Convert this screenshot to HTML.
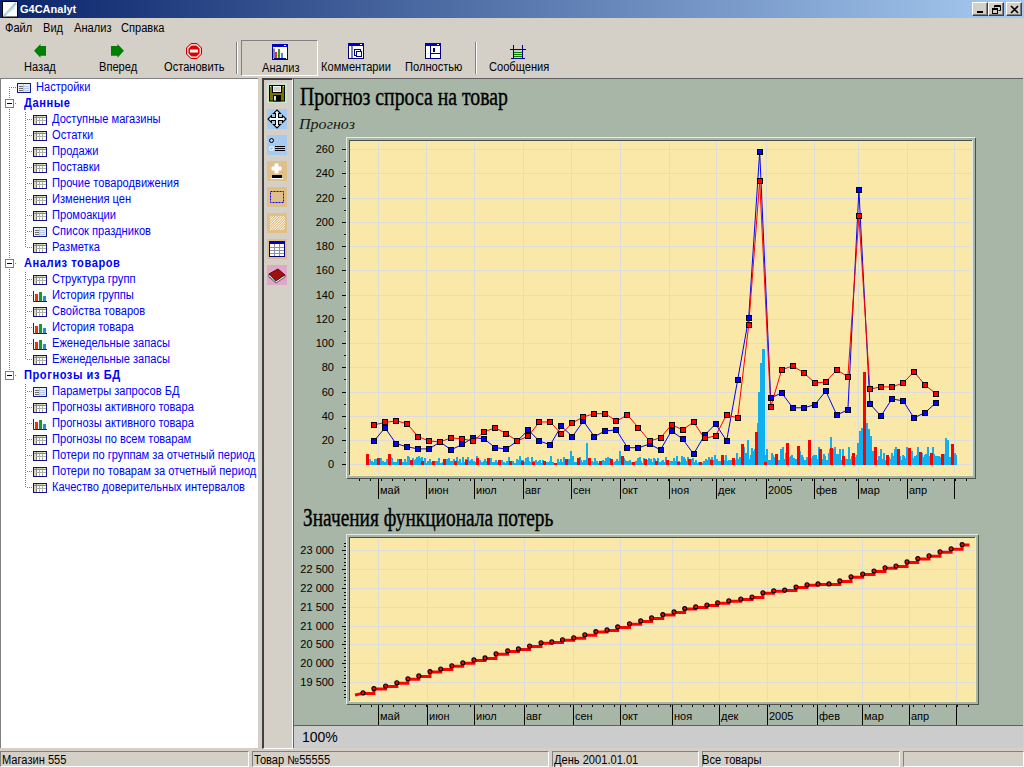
<!DOCTYPE html><html><head><meta charset="utf-8"><style>
*{margin:0;padding:0;box-sizing:border-box}
html,body{width:1024px;height:768px;overflow:hidden;background:#D4D0C8;font-family:"Liberation Sans",sans-serif;font-size:11px;color:#000}
.a{position:absolute}
.t{position:absolute;white-space:nowrap;line-height:13px}
.u{font-size:12px;transform:scaleX(0.925);transform-origin:0 0}
</style></head><body><div class="a" style="left:0;top:0;width:1024px;height:18px;background:linear-gradient(to right,#0A246A,#A6CAF0)"></div>
<svg class="a" style="left:2px;top:1px" width="16" height="17" viewBox="0 0 16 17">
<rect x="0.5" y="0.5" width="15" height="15.5" fill="#fff" stroke="#000"/>
<path d="M2 15 L14 2" stroke="#9cc8d8" stroke-width="2"/><path d="M4 13 L13 5 M6 12 L12 7" stroke="#c8e0e8" stroke-width="1.5"/>
</svg>
<div class="t" style="left:20px;top:2px;color:#fff;font-weight:bold;font-size:11px;line-height:14px">G4CAnalyt</div>
<div class="a" style="left:972px;top:2px;width:16px;height:14px;background:#D4D0C8;border-top:1px solid #fff;border-left:1px solid #fff;border-right:1px solid #404040;border-bottom:1px solid #404040;box-shadow:inset -1px -1px 0 #808080"><div class="a" style="left:4px;top:8px;width:6px;height:2px;background:#000"></div></div>
<div class="a" style="left:988px;top:2px;width:16px;height:14px;background:#D4D0C8;border-top:1px solid #fff;border-left:1px solid #fff;border-right:1px solid #404040;border-bottom:1px solid #404040;box-shadow:inset -1px -1px 0 #808080"><svg class="a" style="left:2px;top:1px" width="10" height="10"><path d="M3.5 1.5h6v5h-2 M3.5 1.5v2 M3.5 2.5h6" stroke="#000" fill="none"/><rect x="1.5" y="4.5" width="5" height="5" fill="none" stroke="#000"/><path d="M1.5 5.5h5" stroke="#000"/></svg></div>
<div class="a" style="left:1006px;top:2px;width:16px;height:14px;background:#D4D0C8;border-top:1px solid #fff;border-left:1px solid #fff;border-right:1px solid #404040;border-bottom:1px solid #404040;box-shadow:inset -1px -1px 0 #808080"><svg class="a" style="left:3px;top:2px" width="9" height="9"><path d="M1 1L8 8M8 1L1 8" stroke="#000" stroke-width="1.6"/></svg></div>
<div class="t u" style="left:5px;top:22px">Файл</div>
<div class="t u" style="left:43px;top:22px">Вид</div>
<div class="t u" style="left:74px;top:22px">Анализ</div>
<div class="t u" style="left:121px;top:22px">Справка</div>
<div class="a" style="left:236px;top:42px;width:1px;height:32px;background:#808080"></div><div class="a" style="left:237px;top:42px;width:1px;height:32px;background:#fff"></div>
<div class="a" style="left:475px;top:42px;width:1px;height:32px;background:#808080"></div><div class="a" style="left:476px;top:42px;width:1px;height:32px;background:#fff"></div>
<div class="a" style="left:241px;top:40px;width:77px;height:36px;border-top:1px solid #808080;border-left:1px solid #808080;border-right:1px solid #fff;border-bottom:1px solid #fff"></div>
<svg class="a" style="left:33px;top:43px" width="15" height="16" viewBox="0 0 15 16"><path d="M1 7.8 L7.5 1 V3 H13 V12.7 H7.5 V14.8 Z" fill="#008000"/></svg>
<svg class="a" style="left:110px;top:43px" width="15" height="16" viewBox="0 0 15 16"><path d="M14 7.8 L7.5 1 V3 H1 V12.7 H7.5 V14.8 Z" fill="#008000"/></svg>
<svg class="a" style="left:186px;top:43px" width="16" height="16" viewBox="0 0 16 16"><path d="M5 0.5H11L15.5 5V11L11 15.5H5L0.5 11V5Z" fill="#E00000" stroke="#C00000"/><path d="M5.3 1.8H10.7L14.2 5.3V10.7L10.7 14.2H5.3L1.8 10.7V5.3Z" fill="none" stroke="#fff" stroke-width="1.2"/><rect x="4" y="6.5" width="8" height="3" fill="#fff"/></svg>
<svg class="a" style="left:272px;top:44px" width="16" height="16" viewBox="0 0 16 16"><rect x="0.5" y="0.5" width="15" height="15" fill="#fff" stroke="#000080"/><rect x="0" y="0" width="16" height="3" fill="#0000C0"/><rect x="12" y="1" width="2" height="1" fill="#fff"/><rect x="3" y="8" width="2" height="6" fill="#E03020"/><rect x="6" y="5" width="2" height="9" fill="#20A020"/><rect x="9" y="9" width="2" height="5" fill="#3090D0"/><path d="M2 4.5V14.5H14" stroke="#000080" fill="none"/></svg>
<svg class="a" style="left:348px;top:43px" width="16" height="16" viewBox="0 0 16 16"><rect x="0.5" y="0.5" width="15" height="15" fill="#fff" stroke="#000080"/><rect x="0" y="0" width="16" height="3" fill="#0000C0"/><rect x="12" y="1" width="2" height="1" fill="#fff"/><path d="M4 3V15" stroke="#000080"/><rect x="6.5" y="6.5" width="6" height="6" fill="none" stroke="#000080"/><rect x="8.5" y="8.5" width="5" height="5" fill="#fff" stroke="#000080"/></svg>
<svg class="a" style="left:425px;top:43px" width="16" height="16" viewBox="0 0 16 16"><rect x="0.5" y="0.5" width="15" height="15" fill="#fff" stroke="#000080"/><rect x="0" y="0" width="16" height="3" fill="#0000C0"/><rect x="12" y="1" width="2" height="1" fill="#fff"/><path d="M5.5 3V15 M5.5 10.5H15" stroke="#000080"/><rect x="8" y="5" width="2" height="4" fill="#000080"/></svg>
<svg class="a" style="left:510px;top:45px" width="16" height="15" viewBox="0 0 16 15"><path d="M3.5 0V14 M12.5 0V14 M0 4.5H16 M1 13.5H15" stroke="#000080" fill="none"/><path d="M4 7.5H12 M4 9.5H12 M4 11.5H12" stroke="#008000"/></svg>
<div class="t u" style="left:24px;top:61px">Назад</div>
<div class="t u" style="left:99px;top:61px">Вперед</div>
<div class="t u" style="left:164px;top:61px">Остановить</div>
<div class="t u" style="left:262px;top:62px">Анализ</div>
<div class="t u" style="left:321px;top:61px">Комментарии</div>
<div class="t u" style="left:405px;top:61px">Полностью</div>
<div class="t u" style="left:489px;top:61px">Сообщения</div>
<div class="a" style="left:0;top:78px;width:258px;height:670px;background:#fff;border-top:1px solid #808080;border-left:1px solid #808080;"></div>
<div class="a" style="left:262px;top:78px;width:31px;height:671px;background:#D4D0C8;border-top:2px solid #404040;border-left:2px solid #404040;border-right:1px solid #fff;border-bottom:1px solid #fff"></div>
<div class="a" style="left:293px;top:78px;width:730px;height:648px;background:#A7B6A7;border-top:1px solid #606060;border-left:1px solid #606060;border-bottom:1px solid #606060"></div>
<div class="a" style="left:293px;top:726px;width:730px;height:22px;background:#CCCCCC;border-left:1px solid #606060"></div>
<div class="t" style="left:302px;top:729px;font-size:14px;line-height:16px">100%</div>
<div class="a" style="left:1023px;top:78px;width:1px;height:670px;background:#D4D0C8"></div>
<div class="a" style="left:0px;top:751px;width:249px;height:16px;border-top:1px solid #808080;border-left:1px solid #808080;border-right:1px solid #fff;border-bottom:1px solid #fff"></div>
<div class="t u" style="left:2px;top:754px">Магазин 555</div>
<div class="a" style="left:252px;top:751px;width:297px;height:16px;border-top:1px solid #808080;border-left:1px solid #808080;border-right:1px solid #fff;border-bottom:1px solid #fff"></div>
<div class="t u" style="left:254px;top:754px">Товар №55555</div>
<div class="a" style="left:552px;top:751px;width:147px;height:16px;border-top:1px solid #808080;border-left:1px solid #808080;border-right:1px solid #fff;border-bottom:1px solid #fff"></div>
<div class="t u" style="left:554px;top:754px">День 2001.01.01</div>
<div class="a" style="left:702px;top:751px;width:198px;height:16px;border-top:1px solid #808080;border-left:1px solid #808080;border-right:1px solid #fff;border-bottom:1px solid #fff"></div>
<div class="t u" style="left:702px;top:754px">Все товары</div>
<div class="a" style="left:903px;top:751px;width:121px;height:16px;border-top:1px solid #808080;border-left:1px solid #808080;border-right:1px solid #fff;border-bottom:1px solid #fff"></div>
<div class="a" style="left:267px;top:83px;width:20px;height:20px;background:#C8E8C8"></div><svg class="a" style="left:267px;top:83px" width="20" height="20" viewBox="0 0 20 20"><rect x="2.5" y="2.5" width="15" height="15.5" fill="#7A7000" stroke="#000"/><rect x="5.5" y="2.5" width="9" height="7" fill="#fff" stroke="#000"/><path d="M6.5 5H13.5M6.5 7H13.5" stroke="#a8a8a8"/><rect x="6" y="12" width="8" height="6.5" fill="#000"/><rect x="7" y="13" width="2" height="4.5" fill="#ddd"/><rect x="3" y="3" width="1" height="1" fill="#cfe"/><rect x="16" y="3" width="1" height="1" fill="#cfe"/></svg>
<div class="a" style="left:267px;top:109px;width:20px;height:20px;background:#A6CAF0"></div><svg class="a" style="left:267px;top:109px" width="20" height="20" viewBox="0 0 20 20"><path d="M10 1L13.5 4.5H11.5V8.5H15.5V6.5L19 10L15.5 13.5V11.5H11.5V15.5H13.5L10 19L6.5 15.5H8.5V11.5H4.5V13.5L1 10L4.5 6.5V8.5H8.5V4.5H6.5Z" fill="#fff" stroke="#000" stroke-width="1.1" stroke-linejoin="miter"/></svg>
<div class="a" style="left:267px;top:135px;width:20px;height:20px;background:#A6CAF0"></div><svg class="a" style="left:267px;top:135px" width="20" height="20" viewBox="0 0 20 20"><circle cx="4.5" cy="5.5" r="2" fill="none" stroke="#000"/><circle cx="4.5" cy="13.5" r="2" fill="none" stroke="#fff"/><path d="M8 11.5H18M8 13.5H18M8 15.5H18" stroke="#000"/></svg>
<div class="a" style="left:267px;top:161px;width:20px;height:20px;background:#E0C088"></div><svg class="a" style="left:267px;top:161px" width="20" height="20" viewBox="0 0 20 20"><path d="M8 3H11V6H14V9H11V12H8V9H5V6H8Z" fill="#fff" stroke="#fff"/><rect x="5" y="14" width="10" height="3" fill="#000"/><rect x="4" y="17" width="12" height="1" fill="#fff"/></svg>
<div class="a" style="left:267px;top:187px;width:20px;height:20px;background:#E0C088"></div><svg class="a" style="left:267px;top:187px" width="20" height="20" viewBox="0 0 20 20"><rect x="3.5" y="4.5" width="13" height="11" fill="none" stroke="#0000FF" stroke-dasharray="2 1"/></svg>
<div class="a" style="left:267px;top:213px;width:20px;height:20px;background:#E0C088"></div><svg class="a" style="left:267px;top:213px" width="20" height="20" viewBox="0 0 20 20"><clipPath id="hc"><rect x="3" y="3" width="15" height="14"/></clipPath><g clip-path="url(#hc)"><path d="M-12.0 17L2.0 3" stroke="#fff" stroke-width="0.9"/><path d="M-9.5 17L4.5 3" stroke="#fff" stroke-width="0.9"/><path d="M-7.0 17L7.0 3" stroke="#fff" stroke-width="0.9"/><path d="M-4.5 17L9.5 3" stroke="#fff" stroke-width="0.9"/><path d="M-2.0 17L12.0 3" stroke="#fff" stroke-width="0.9"/><path d="M0.5 17L14.5 3" stroke="#fff" stroke-width="0.9"/><path d="M3.0 17L17.0 3" stroke="#fff" stroke-width="0.9"/><path d="M5.5 17L19.5 3" stroke="#fff" stroke-width="0.9"/><path d="M8.0 17L22.0 3" stroke="#fff" stroke-width="0.9"/><path d="M10.5 17L24.5 3" stroke="#fff" stroke-width="0.9"/><path d="M13.0 17L27.0 3" stroke="#fff" stroke-width="0.9"/><path d="M15.5 17L29.5 3" stroke="#fff" stroke-width="0.9"/></g></svg>
<div class="a" style="left:267px;top:239px;width:20px;height:20px;background:#E0C088"></div><svg class="a" style="left:267px;top:239px" width="20" height="20" viewBox="0 0 20 20"><rect x="2.5" y="2.5" width="15" height="15" fill="#fff" stroke="#000080"/><rect x="2" y="2" width="16" height="3" fill="#0000C0"/><path d="M3 8.5H17M3 11.5H17M3 14.5H17M7.5 5V17M12.5 5V17" stroke="#9090A0"/></svg>
<div class="a" style="left:267px;top:265px;width:20px;height:20px;background:#E0A8C8"></div><svg class="a" style="left:267px;top:265px" width="20" height="20" viewBox="0 0 20 20"><path d="M2 9L11 4L18 10L9 16Z" fill="#A01010" stroke="#600"/><path d="M2 9V12L9 18L18 12V10L9 16Z" fill="#fff" stroke="#000" stroke-width="0.6"/><path d="M3 12L9 17" stroke="#2a8" /></svg>
<div class="a" style="left:9px;top:87px;width:1px;height:288px;background:repeating-linear-gradient(to bottom,#808080 0 1px,transparent 1px 2px)"></div>
<div class="a" style="left:25px;top:112px;width:1px;height:136px;background:repeating-linear-gradient(to bottom,#808080 0 1px,transparent 1px 2px)"></div>
<div class="a" style="left:25px;top:272px;width:1px;height:88px;background:repeating-linear-gradient(to bottom,#808080 0 1px,transparent 1px 2px)"></div>
<div class="a" style="left:25px;top:384px;width:1px;height:104px;background:repeating-linear-gradient(to bottom,#808080 0 1px,transparent 1px 2px)"></div>
<div class="a" style="left:11px;top:87px;width:5px;height:1px;background:repeating-linear-gradient(to right,#808080 0 1px,transparent 1px 2px)"></div>
<svg class="a" style="left:17px;top:83px" width="15" height="11"><rect x="0.5" y="0.5" width="13" height="9" fill="#E8ECF4" stroke="#10208A"/><path d="M2 3.5H6M2 5.5H6M2 7.5H6" stroke="#707070"/><path d="M7 3.5H12M7 5.5H12M7 7.5H12" stroke="#B8C8E8"/><path d="M6.5 1V9" stroke="#C0C8E0"/></svg>
<div class="t u" style="left:36px;top:81px;color:#0000FF">Настройки</div>
<div class="a" style="left:5px;top:99px;width:9px;height:9px;border:1px solid #808080;background:#fff"></div><div class="a" style="left:7px;top:103px;width:5px;height:1px;background:#000"></div>
<div class="a" style="left:15px;top:103px;width:1px;height:1px;background:#808080"></div>
<div class="t u" style="left:24px;top:97px;color:#0000FF;font-weight:bold;letter-spacing:0.6px">Данные</div>
<div class="a" style="left:27px;top:119px;width:5px;height:1px;background:repeating-linear-gradient(to right,#808080 0 1px,transparent 1px 2px)"></div>
<svg class="a" style="left:33px;top:115px" width="15" height="11"><rect x="0.5" y="0.5" width="13" height="9" fill="#fff" stroke="#10108A"/><rect x="1" y="1" width="12" height="2" fill="#D8D4C0"/><rect x="1" y="1" width="2.5" height="8" fill="#D8D4C0"/><path d="M1 2.5H13M3.5 1V9" stroke="#888"/><path d="M3.5 5.5H13M6.5 3V9M9.5 3V9" stroke="#B0B0B0"/></svg>
<div class="t u" style="left:52px;top:113px;color:#0000FF">Доступные магазины</div>
<div class="a" style="left:27px;top:135px;width:5px;height:1px;background:repeating-linear-gradient(to right,#808080 0 1px,transparent 1px 2px)"></div>
<svg class="a" style="left:33px;top:131px" width="15" height="11"><rect x="0.5" y="0.5" width="13" height="9" fill="#fff" stroke="#10108A"/><rect x="1" y="1" width="12" height="2" fill="#D8D4C0"/><rect x="1" y="1" width="2.5" height="8" fill="#D8D4C0"/><path d="M1 2.5H13M3.5 1V9" stroke="#888"/><path d="M3.5 5.5H13M6.5 3V9M9.5 3V9" stroke="#B0B0B0"/></svg>
<div class="t u" style="left:52px;top:129px;color:#0000FF">Остатки</div>
<div class="a" style="left:27px;top:151px;width:5px;height:1px;background:repeating-linear-gradient(to right,#808080 0 1px,transparent 1px 2px)"></div>
<svg class="a" style="left:33px;top:147px" width="15" height="11"><rect x="0.5" y="0.5" width="13" height="9" fill="#fff" stroke="#10108A"/><rect x="1" y="1" width="12" height="2" fill="#D8D4C0"/><rect x="1" y="1" width="2.5" height="8" fill="#D8D4C0"/><path d="M1 2.5H13M3.5 1V9" stroke="#888"/><path d="M3.5 5.5H13M6.5 3V9M9.5 3V9" stroke="#B0B0B0"/></svg>
<div class="t u" style="left:52px;top:145px;color:#0000FF">Продажи</div>
<div class="a" style="left:27px;top:167px;width:5px;height:1px;background:repeating-linear-gradient(to right,#808080 0 1px,transparent 1px 2px)"></div>
<svg class="a" style="left:33px;top:163px" width="15" height="11"><rect x="0.5" y="0.5" width="13" height="9" fill="#fff" stroke="#10108A"/><rect x="1" y="1" width="12" height="2" fill="#D8D4C0"/><rect x="1" y="1" width="2.5" height="8" fill="#D8D4C0"/><path d="M1 2.5H13M3.5 1V9" stroke="#888"/><path d="M3.5 5.5H13M6.5 3V9M9.5 3V9" stroke="#B0B0B0"/></svg>
<div class="t u" style="left:52px;top:161px;color:#0000FF">Поставки</div>
<div class="a" style="left:27px;top:183px;width:5px;height:1px;background:repeating-linear-gradient(to right,#808080 0 1px,transparent 1px 2px)"></div>
<svg class="a" style="left:33px;top:179px" width="15" height="11"><rect x="0.5" y="0.5" width="13" height="9" fill="#fff" stroke="#10108A"/><rect x="1" y="1" width="12" height="2" fill="#D8D4C0"/><rect x="1" y="1" width="2.5" height="8" fill="#D8D4C0"/><path d="M1 2.5H13M3.5 1V9" stroke="#888"/><path d="M3.5 5.5H13M6.5 3V9M9.5 3V9" stroke="#B0B0B0"/></svg>
<div class="t u" style="left:52px;top:177px;color:#0000FF">Прочие товародвижения</div>
<div class="a" style="left:27px;top:199px;width:5px;height:1px;background:repeating-linear-gradient(to right,#808080 0 1px,transparent 1px 2px)"></div>
<svg class="a" style="left:33px;top:195px" width="15" height="11"><rect x="0.5" y="0.5" width="13" height="9" fill="#fff" stroke="#10108A"/><rect x="1" y="1" width="12" height="2" fill="#D8D4C0"/><rect x="1" y="1" width="2.5" height="8" fill="#D8D4C0"/><path d="M1 2.5H13M3.5 1V9" stroke="#888"/><path d="M3.5 5.5H13M6.5 3V9M9.5 3V9" stroke="#B0B0B0"/></svg>
<div class="t u" style="left:52px;top:193px;color:#0000FF">Изменения цен</div>
<div class="a" style="left:27px;top:215px;width:5px;height:1px;background:repeating-linear-gradient(to right,#808080 0 1px,transparent 1px 2px)"></div>
<svg class="a" style="left:33px;top:211px" width="15" height="11"><rect x="0.5" y="0.5" width="13" height="9" fill="#fff" stroke="#10108A"/><rect x="1" y="1" width="12" height="2" fill="#D8D4C0"/><rect x="1" y="1" width="2.5" height="8" fill="#D8D4C0"/><path d="M1 2.5H13M3.5 1V9" stroke="#888"/><path d="M3.5 5.5H13M6.5 3V9M9.5 3V9" stroke="#B0B0B0"/></svg>
<div class="t u" style="left:52px;top:209px;color:#0000FF">Промоакции</div>
<div class="a" style="left:27px;top:231px;width:5px;height:1px;background:repeating-linear-gradient(to right,#808080 0 1px,transparent 1px 2px)"></div>
<svg class="a" style="left:33px;top:227px" width="15" height="11"><rect x="0.5" y="0.5" width="13" height="9" fill="#E8ECF4" stroke="#10208A"/><path d="M2 3.5H6M2 5.5H6M2 7.5H6" stroke="#707070"/><path d="M7 3.5H12M7 5.5H12M7 7.5H12" stroke="#B8C8E8"/><path d="M6.5 1V9" stroke="#C0C8E0"/></svg>
<div class="t u" style="left:52px;top:225px;color:#0000FF">Список праздников</div>
<div class="a" style="left:27px;top:247px;width:5px;height:1px;background:repeating-linear-gradient(to right,#808080 0 1px,transparent 1px 2px)"></div>
<svg class="a" style="left:33px;top:243px" width="15" height="11"><rect x="0.5" y="0.5" width="13" height="9" fill="#fff" stroke="#10108A"/><rect x="1" y="1" width="12" height="2" fill="#D8D4C0"/><rect x="1" y="1" width="2.5" height="8" fill="#D8D4C0"/><path d="M1 2.5H13M3.5 1V9" stroke="#888"/><path d="M3.5 5.5H13M6.5 3V9M9.5 3V9" stroke="#B0B0B0"/></svg>
<div class="t u" style="left:52px;top:241px;color:#0000FF">Разметка</div>
<div class="a" style="left:5px;top:259px;width:9px;height:9px;border:1px solid #808080;background:#fff"></div><div class="a" style="left:7px;top:263px;width:5px;height:1px;background:#000"></div>
<div class="a" style="left:15px;top:263px;width:1px;height:1px;background:#808080"></div>
<div class="t u" style="left:24px;top:257px;color:#0000FF;font-weight:bold;letter-spacing:0.6px">Анализ товаров</div>
<div class="a" style="left:27px;top:279px;width:5px;height:1px;background:repeating-linear-gradient(to right,#808080 0 1px,transparent 1px 2px)"></div>
<svg class="a" style="left:33px;top:275px" width="15" height="11"><rect x="0.5" y="0.5" width="13" height="9" fill="#fff" stroke="#10108A"/><rect x="1" y="1" width="12" height="2" fill="#D8D4C0"/><rect x="1" y="1" width="2.5" height="8" fill="#D8D4C0"/><path d="M1 2.5H13M3.5 1V9" stroke="#888"/><path d="M3.5 5.5H13M6.5 3V9M9.5 3V9" stroke="#B0B0B0"/></svg>
<div class="t u" style="left:52px;top:273px;color:#0000FF">Структура групп</div>
<div class="a" style="left:27px;top:295px;width:5px;height:1px;background:repeating-linear-gradient(to right,#808080 0 1px,transparent 1px 2px)"></div>
<svg class="a" style="left:33px;top:291px" width="15" height="11"><path d="M0.5 0V10.5H14" stroke="#10208A" fill="none"/><rect x="2" y="3" width="3" height="7" fill="#F03010"/><rect x="6" y="1" width="3" height="9" fill="#10A020"/><rect x="10" y="5" width="3" height="5" fill="#2090D0"/></svg>
<div class="t u" style="left:52px;top:289px;color:#0000FF">История группы</div>
<div class="a" style="left:27px;top:311px;width:5px;height:1px;background:repeating-linear-gradient(to right,#808080 0 1px,transparent 1px 2px)"></div>
<svg class="a" style="left:33px;top:307px" width="15" height="11"><rect x="0.5" y="0.5" width="13" height="9" fill="#fff" stroke="#10108A"/><rect x="1" y="1" width="12" height="2" fill="#D8D4C0"/><rect x="1" y="1" width="2.5" height="8" fill="#D8D4C0"/><path d="M1 2.5H13M3.5 1V9" stroke="#888"/><path d="M3.5 5.5H13M6.5 3V9M9.5 3V9" stroke="#B0B0B0"/></svg>
<div class="t u" style="left:52px;top:305px;color:#0000FF">Свойства товаров</div>
<div class="a" style="left:27px;top:327px;width:5px;height:1px;background:repeating-linear-gradient(to right,#808080 0 1px,transparent 1px 2px)"></div>
<svg class="a" style="left:33px;top:323px" width="15" height="11"><path d="M0.5 0V10.5H14" stroke="#10208A" fill="none"/><rect x="2" y="3" width="3" height="7" fill="#F03010"/><rect x="6" y="1" width="3" height="9" fill="#10A020"/><rect x="10" y="5" width="3" height="5" fill="#2090D0"/></svg>
<div class="t u" style="left:52px;top:321px;color:#0000FF">История товара</div>
<div class="a" style="left:27px;top:343px;width:5px;height:1px;background:repeating-linear-gradient(to right,#808080 0 1px,transparent 1px 2px)"></div>
<svg class="a" style="left:33px;top:339px" width="15" height="11"><path d="M0.5 0V10.5H14" stroke="#10208A" fill="none"/><rect x="2" y="3" width="3" height="7" fill="#F03010"/><rect x="6" y="1" width="3" height="9" fill="#10A020"/><rect x="10" y="5" width="3" height="5" fill="#2090D0"/></svg>
<div class="t u" style="left:52px;top:337px;color:#0000FF">Еженедельные запасы</div>
<div class="a" style="left:27px;top:359px;width:5px;height:1px;background:repeating-linear-gradient(to right,#808080 0 1px,transparent 1px 2px)"></div>
<svg class="a" style="left:33px;top:355px" width="15" height="11"><rect x="0.5" y="0.5" width="13" height="9" fill="#fff" stroke="#10108A"/><rect x="1" y="1" width="12" height="2" fill="#D8D4C0"/><rect x="1" y="1" width="2.5" height="8" fill="#D8D4C0"/><path d="M1 2.5H13M3.5 1V9" stroke="#888"/><path d="M3.5 5.5H13M6.5 3V9M9.5 3V9" stroke="#B0B0B0"/></svg>
<div class="t u" style="left:52px;top:353px;color:#0000FF">Еженедельные запасы</div>
<div class="a" style="left:5px;top:371px;width:9px;height:9px;border:1px solid #808080;background:#fff"></div><div class="a" style="left:7px;top:375px;width:5px;height:1px;background:#000"></div>
<div class="a" style="left:15px;top:375px;width:1px;height:1px;background:#808080"></div>
<div class="t u" style="left:24px;top:369px;color:#0000FF;font-weight:bold;letter-spacing:0.6px">Прогнозы из БД</div>
<div class="a" style="left:27px;top:391px;width:5px;height:1px;background:repeating-linear-gradient(to right,#808080 0 1px,transparent 1px 2px)"></div>
<svg class="a" style="left:33px;top:387px" width="15" height="11"><rect x="0.5" y="0.5" width="13" height="9" fill="#E8ECF4" stroke="#10208A"/><path d="M2 3.5H6M2 5.5H6M2 7.5H6" stroke="#707070"/><path d="M7 3.5H12M7 5.5H12M7 7.5H12" stroke="#B8C8E8"/><path d="M6.5 1V9" stroke="#C0C8E0"/></svg>
<div class="t u" style="left:52px;top:385px;color:#0000FF">Параметры запросов БД</div>
<div class="a" style="left:27px;top:407px;width:5px;height:1px;background:repeating-linear-gradient(to right,#808080 0 1px,transparent 1px 2px)"></div>
<svg class="a" style="left:33px;top:403px" width="15" height="11"><rect x="0.5" y="0.5" width="13" height="9" fill="#fff" stroke="#10108A"/><rect x="1" y="1" width="12" height="2" fill="#D8D4C0"/><rect x="1" y="1" width="2.5" height="8" fill="#D8D4C0"/><path d="M1 2.5H13M3.5 1V9" stroke="#888"/><path d="M3.5 5.5H13M6.5 3V9M9.5 3V9" stroke="#B0B0B0"/></svg>
<div class="t u" style="left:52px;top:401px;color:#0000FF">Прогнозы активного товара</div>
<div class="a" style="left:27px;top:423px;width:5px;height:1px;background:repeating-linear-gradient(to right,#808080 0 1px,transparent 1px 2px)"></div>
<svg class="a" style="left:33px;top:419px" width="15" height="11"><path d="M0.5 0V10.5H14" stroke="#10208A" fill="none"/><rect x="2" y="3" width="3" height="7" fill="#F03010"/><rect x="6" y="1" width="3" height="9" fill="#10A020"/><rect x="10" y="5" width="3" height="5" fill="#2090D0"/></svg>
<div class="t u" style="left:52px;top:417px;color:#0000FF">Прогнозы активного товара</div>
<div class="a" style="left:27px;top:439px;width:5px;height:1px;background:repeating-linear-gradient(to right,#808080 0 1px,transparent 1px 2px)"></div>
<svg class="a" style="left:33px;top:435px" width="15" height="11"><rect x="0.5" y="0.5" width="13" height="9" fill="#fff" stroke="#10108A"/><rect x="1" y="1" width="12" height="2" fill="#D8D4C0"/><rect x="1" y="1" width="2.5" height="8" fill="#D8D4C0"/><path d="M1 2.5H13M3.5 1V9" stroke="#888"/><path d="M3.5 5.5H13M6.5 3V9M9.5 3V9" stroke="#B0B0B0"/></svg>
<div class="t u" style="left:52px;top:433px;color:#0000FF">Прогнозы по всем товарам</div>
<div class="a" style="left:27px;top:455px;width:5px;height:1px;background:repeating-linear-gradient(to right,#808080 0 1px,transparent 1px 2px)"></div>
<svg class="a" style="left:33px;top:451px" width="15" height="11"><rect x="0.5" y="0.5" width="13" height="9" fill="#fff" stroke="#10108A"/><rect x="1" y="1" width="12" height="2" fill="#D8D4C0"/><rect x="1" y="1" width="2.5" height="8" fill="#D8D4C0"/><path d="M1 2.5H13M3.5 1V9" stroke="#888"/><path d="M3.5 5.5H13M6.5 3V9M9.5 3V9" stroke="#B0B0B0"/></svg>
<div class="t u" style="left:52px;top:449px;color:#0000FF">Потери по группам за отчетный период</div>
<div class="a" style="left:27px;top:471px;width:5px;height:1px;background:repeating-linear-gradient(to right,#808080 0 1px,transparent 1px 2px)"></div>
<svg class="a" style="left:33px;top:467px" width="15" height="11"><rect x="0.5" y="0.5" width="13" height="9" fill="#fff" stroke="#10108A"/><rect x="1" y="1" width="12" height="2" fill="#D8D4C0"/><rect x="1" y="1" width="2.5" height="8" fill="#D8D4C0"/><path d="M1 2.5H13M3.5 1V9" stroke="#888"/><path d="M3.5 5.5H13M6.5 3V9M9.5 3V9" stroke="#B0B0B0"/></svg>
<div class="t u" style="left:52px;top:465px;color:#0000FF">Потери по товарам за отчетный период</div>
<div class="a" style="left:27px;top:487px;width:5px;height:1px;background:repeating-linear-gradient(to right,#808080 0 1px,transparent 1px 2px)"></div>
<svg class="a" style="left:33px;top:483px" width="15" height="11"><rect x="0.5" y="0.5" width="13" height="9" fill="#fff" stroke="#10108A"/><rect x="1" y="1" width="12" height="2" fill="#D8D4C0"/><rect x="1" y="1" width="2.5" height="8" fill="#D8D4C0"/><path d="M1 2.5H13M3.5 1V9" stroke="#888"/><path d="M3.5 5.5H13M6.5 3V9M9.5 3V9" stroke="#B0B0B0"/></svg>
<div class="t u" style="left:52px;top:481px;color:#0000FF">Качество доверительных интервалов</div>
<div class="t" style="left:300px;top:82px;font-family:'Liberation Serif',serif;font-size:26px;line-height:29px;-webkit-text-stroke:0.4px #000;transform-origin:0 0;transform:scaleX(0.76)">Прогноз спроса на товар</div>
<div class="t" style="left:299px;top:116px;font-family:'Liberation Serif',serif;font-style:italic;font-size:15px;line-height:17px;color:#181818;transform-origin:0 0;transform:scaleX(1.07)">Прогноз</div>
<div class="t" style="left:303px;top:503px;font-family:'Liberation Serif',serif;font-size:26px;line-height:29px;-webkit-text-stroke:0.4px #000;transform-origin:0 0;transform:scaleX(0.745)">Значения функционала потерь</div>
<svg class="a" style="left:0;top:0;font-family:'Liberation Sans',sans-serif" width="1024" height="768"><rect x="346" y="137" width="629" height="1" fill="#E4ECE4"/><rect x="346" y="137" width="1" height="341" fill="#E4ECE4"/><rect x="975" y="138" width="1" height="341" fill="#4A524A"/><rect x="347" y="478" width="629" height="1" fill="#4A524A"/><rect x="350" y="141" width="622" height="334" fill="#FAE8A9"/><rect x="349" y="140" width="623" height="1" fill="#4A524A"/><rect x="349" y="140" width="1" height="335" fill="#4A524A"/><rect x="972" y="140" width="1" height="336" fill="#E4ECE4"/><rect x="349" y="475" width="623" height="1" fill="#E4ECE4"/><rect x="350" y="464" width="621" height="1" fill="#DCDCD8"/><rect x="342" y="464" width="4" height="1" fill="#000"/><text x="334" y="468" text-anchor="end" font-size="11">0</text><rect x="344" y="452" width="2" height="1" fill="#000"/><rect x="350" y="440" width="621" height="1" fill="#DCDCD8"/><rect x="342" y="440" width="4" height="1" fill="#000"/><text x="334" y="444" text-anchor="end" font-size="11">20</text><rect x="344" y="428" width="2" height="1" fill="#000"/><rect x="350" y="416" width="621" height="1" fill="#DCDCD8"/><rect x="342" y="416" width="4" height="1" fill="#000"/><text x="334" y="420" text-anchor="end" font-size="11">40</text><rect x="344" y="404" width="2" height="1" fill="#000"/><rect x="350" y="392" width="621" height="1" fill="#DCDCD8"/><rect x="342" y="392" width="4" height="1" fill="#000"/><text x="334" y="396" text-anchor="end" font-size="11">60</text><rect x="344" y="379" width="2" height="1" fill="#000"/><rect x="350" y="367" width="621" height="1" fill="#DCDCD8"/><rect x="342" y="367" width="4" height="1" fill="#000"/><text x="334" y="371" text-anchor="end" font-size="11">80</text><rect x="344" y="355" width="2" height="1" fill="#000"/><rect x="350" y="343" width="621" height="1" fill="#DCDCD8"/><rect x="342" y="343" width="4" height="1" fill="#000"/><text x="334" y="347" text-anchor="end" font-size="11">100</text><rect x="344" y="331" width="2" height="1" fill="#000"/><rect x="350" y="319" width="621" height="1" fill="#DCDCD8"/><rect x="342" y="319" width="4" height="1" fill="#000"/><text x="334" y="323" text-anchor="end" font-size="11">120</text><rect x="344" y="307" width="2" height="1" fill="#000"/><rect x="350" y="295" width="621" height="1" fill="#DCDCD8"/><rect x="342" y="295" width="4" height="1" fill="#000"/><text x="334" y="299" text-anchor="end" font-size="11">140</text><rect x="344" y="282" width="2" height="1" fill="#000"/><rect x="350" y="270" width="621" height="1" fill="#DCDCD8"/><rect x="342" y="270" width="4" height="1" fill="#000"/><text x="334" y="274" text-anchor="end" font-size="11">160</text><rect x="344" y="258" width="2" height="1" fill="#000"/><rect x="350" y="246" width="621" height="1" fill="#DCDCD8"/><rect x="342" y="246" width="4" height="1" fill="#000"/><text x="334" y="250" text-anchor="end" font-size="11">180</text><rect x="344" y="234" width="2" height="1" fill="#000"/><rect x="350" y="222" width="621" height="1" fill="#DCDCD8"/><rect x="342" y="222" width="4" height="1" fill="#000"/><text x="334" y="226" text-anchor="end" font-size="11">200</text><rect x="344" y="210" width="2" height="1" fill="#000"/><rect x="350" y="198" width="621" height="1" fill="#DCDCD8"/><rect x="342" y="198" width="4" height="1" fill="#000"/><text x="334" y="202" text-anchor="end" font-size="11">220</text><rect x="344" y="186" width="2" height="1" fill="#000"/><rect x="350" y="173" width="621" height="1" fill="#DCDCD8"/><rect x="342" y="173" width="4" height="1" fill="#000"/><text x="334" y="177" text-anchor="end" font-size="11">240</text><rect x="344" y="161" width="2" height="1" fill="#000"/><rect x="350" y="149" width="621" height="1" fill="#DCDCD8"/><rect x="342" y="149" width="4" height="1" fill="#000"/><text x="334" y="153" text-anchor="end" font-size="11">260</text><rect x="378" y="142" width="1" height="332" fill="#DCDCD8"/><rect x="378" y="479" width="1" height="20" fill="#000"/><rect x="426" y="142" width="1" height="332" fill="#DCDCD8"/><rect x="426" y="479" width="1" height="20" fill="#000"/><rect x="474" y="142" width="1" height="332" fill="#DCDCD8"/><rect x="474" y="479" width="1" height="20" fill="#000"/><rect x="523" y="142" width="1" height="332" fill="#DCDCD8"/><rect x="523" y="479" width="1" height="20" fill="#000"/><rect x="571" y="142" width="1" height="332" fill="#DCDCD8"/><rect x="571" y="479" width="1" height="20" fill="#000"/><rect x="620" y="142" width="1" height="332" fill="#DCDCD8"/><rect x="620" y="479" width="1" height="20" fill="#000"/><rect x="669" y="142" width="1" height="332" fill="#DCDCD8"/><rect x="669" y="479" width="1" height="20" fill="#000"/><rect x="716" y="142" width="1" height="332" fill="#DCDCD8"/><rect x="716" y="479" width="1" height="20" fill="#000"/><rect x="766" y="142" width="1" height="332" fill="#DCDCD8"/><rect x="766" y="479" width="1" height="20" fill="#000"/><rect x="814" y="142" width="1" height="332" fill="#DCDCD8"/><rect x="814" y="479" width="1" height="20" fill="#000"/><rect x="858" y="142" width="1" height="332" fill="#DCDCD8"/><rect x="858" y="479" width="1" height="20" fill="#000"/><rect x="907" y="142" width="1" height="332" fill="#DCDCD8"/><rect x="907" y="479" width="1" height="20" fill="#000"/><rect x="954" y="142" width="1" height="332" fill="#DCDCD8"/><rect x="954" y="479" width="1" height="20" fill="#000"/><text x="380" y="494" font-size="11">май</text><text x="428" y="494" font-size="11">июн</text><text x="476" y="494" font-size="11">июл</text><text x="525" y="494" font-size="11">авг</text><text x="573" y="494" font-size="11">сен</text><text x="622" y="494" font-size="11">окт</text><text x="671" y="494" font-size="11">ноя</text><text x="718" y="494" font-size="11">дек</text><text x="768" y="494" font-size="11">2005</text><text x="816" y="494" font-size="11">фев</text><text x="860" y="494" font-size="11">мар</text><text x="909" y="494" font-size="11">апр</text><rect x="359" y="479" width="1" height="2" fill="#000"/><rect x="370" y="479" width="1" height="2" fill="#000"/><rect x="381" y="479" width="1" height="2" fill="#000"/><rect x="392" y="479" width="1" height="2" fill="#000"/><rect x="404" y="479" width="1" height="2" fill="#000"/><rect x="415" y="479" width="1" height="2" fill="#000"/><rect x="426" y="479" width="1" height="2" fill="#000"/><rect x="437" y="479" width="1" height="2" fill="#000"/><rect x="448" y="479" width="1" height="2" fill="#000"/><rect x="459" y="479" width="1" height="2" fill="#000"/><rect x="470" y="479" width="1" height="2" fill="#000"/><rect x="481" y="479" width="1" height="2" fill="#000"/><rect x="492" y="479" width="1" height="2" fill="#000"/><rect x="503" y="479" width="1" height="2" fill="#000"/><rect x="514" y="479" width="1" height="2" fill="#000"/><rect x="525" y="479" width="1" height="2" fill="#000"/><rect x="536" y="479" width="1" height="2" fill="#000"/><rect x="547" y="479" width="1" height="2" fill="#000"/><rect x="558" y="479" width="1" height="2" fill="#000"/><rect x="569" y="479" width="1" height="2" fill="#000"/><rect x="580" y="479" width="1" height="2" fill="#000"/><rect x="591" y="479" width="1" height="2" fill="#000"/><rect x="602" y="479" width="1" height="2" fill="#000"/><rect x="613" y="479" width="1" height="2" fill="#000"/><rect x="624" y="479" width="1" height="2" fill="#000"/><rect x="635" y="479" width="1" height="2" fill="#000"/><rect x="646" y="479" width="1" height="2" fill="#000"/><rect x="657" y="479" width="1" height="2" fill="#000"/><rect x="668" y="479" width="1" height="2" fill="#000"/><rect x="679" y="479" width="1" height="2" fill="#000"/><rect x="690" y="479" width="1" height="2" fill="#000"/><rect x="701" y="479" width="1" height="2" fill="#000"/><rect x="712" y="479" width="1" height="2" fill="#000"/><rect x="723" y="479" width="1" height="2" fill="#000"/><rect x="734" y="479" width="1" height="2" fill="#000"/><rect x="745" y="479" width="1" height="2" fill="#000"/><rect x="756" y="479" width="1" height="2" fill="#000"/><rect x="768" y="479" width="1" height="2" fill="#000"/><rect x="779" y="479" width="1" height="2" fill="#000"/><rect x="790" y="479" width="1" height="2" fill="#000"/><rect x="801" y="479" width="1" height="2" fill="#000"/><rect x="812" y="479" width="1" height="2" fill="#000"/><rect x="823" y="479" width="1" height="2" fill="#000"/><rect x="834" y="479" width="1" height="2" fill="#000"/><rect x="845" y="479" width="1" height="2" fill="#000"/><rect x="856" y="479" width="1" height="2" fill="#000"/><rect x="867" y="479" width="1" height="2" fill="#000"/><rect x="878" y="479" width="1" height="2" fill="#000"/><rect x="889" y="479" width="1" height="2" fill="#000"/><rect x="900" y="479" width="1" height="2" fill="#000"/><rect x="911" y="479" width="1" height="2" fill="#000"/><rect x="922" y="479" width="1" height="2" fill="#000"/><rect x="933" y="479" width="1" height="2" fill="#000"/><rect x="944" y="479" width="1" height="2" fill="#000"/><rect x="955" y="479" width="1" height="2" fill="#000"/><rect x="966" y="479" width="1" height="2" fill="#000"/><rect x="366" y="459" width="2" height="6" fill="#10B0F0"/><rect x="367" y="461" width="2" height="4" fill="#10B0F0"/><rect x="369" y="459" width="2" height="6" fill="#10B0F0"/><rect x="371" y="461" width="2" height="4" fill="#10B0F0"/><rect x="372" y="462" width="2" height="3" fill="#10B0F0"/><rect x="374" y="459" width="2" height="6" fill="#10B0F0"/><rect x="375" y="459" width="2" height="6" fill="#10B0F0"/><rect x="377" y="459" width="2" height="6" fill="#10B0F0"/><rect x="378" y="461" width="2" height="4" fill="#10B0F0"/><rect x="380" y="458" width="2" height="7" fill="#10B0F0"/><rect x="382" y="461" width="2" height="4" fill="#10B0F0"/><rect x="383" y="462" width="2" height="3" fill="#10B0F0"/><rect x="385" y="462" width="2" height="3" fill="#10B0F0"/><rect x="386" y="459" width="2" height="6" fill="#10B0F0"/><rect x="388" y="459" width="2" height="6" fill="#10B0F0"/><rect x="390" y="457" width="2" height="8" fill="#10B0F0"/><rect x="391" y="458" width="2" height="7" fill="#10B0F0"/><rect x="393" y="462" width="2" height="3" fill="#10B0F0"/><rect x="394" y="462" width="2" height="3" fill="#10B0F0"/><rect x="396" y="462" width="2" height="3" fill="#10B0F0"/><rect x="397" y="459" width="2" height="6" fill="#10B0F0"/><rect x="399" y="461" width="2" height="4" fill="#10B0F0"/><rect x="401" y="462" width="2" height="3" fill="#10B0F0"/><rect x="402" y="462" width="2" height="3" fill="#10B0F0"/><rect x="404" y="459" width="2" height="6" fill="#10B0F0"/><rect x="405" y="462" width="2" height="3" fill="#10B0F0"/><rect x="407" y="456" width="2" height="9" fill="#10B0F0"/><rect x="408" y="457" width="2" height="8" fill="#10B0F0"/><rect x="410" y="463" width="2" height="2" fill="#10B0F0"/><rect x="412" y="458" width="2" height="7" fill="#10B0F0"/><rect x="413" y="460" width="2" height="5" fill="#10B0F0"/><rect x="415" y="459" width="2" height="6" fill="#10B0F0"/><rect x="416" y="457" width="2" height="8" fill="#10B0F0"/><rect x="418" y="456" width="2" height="9" fill="#10B0F0"/><rect x="419" y="458" width="2" height="7" fill="#10B0F0"/><rect x="421" y="457" width="2" height="8" fill="#10B0F0"/><rect x="423" y="462" width="2" height="3" fill="#10B0F0"/><rect x="424" y="458" width="2" height="7" fill="#10B0F0"/><rect x="426" y="463" width="2" height="2" fill="#10B0F0"/><rect x="427" y="461" width="2" height="4" fill="#10B0F0"/><rect x="429" y="459" width="2" height="6" fill="#10B0F0"/><rect x="431" y="462" width="2" height="3" fill="#10B0F0"/><rect x="432" y="463" width="2" height="2" fill="#10B0F0"/><rect x="434" y="463" width="2" height="2" fill="#10B0F0"/><rect x="435" y="461" width="2" height="4" fill="#10B0F0"/><rect x="437" y="461" width="2" height="4" fill="#10B0F0"/><rect x="438" y="458" width="2" height="7" fill="#10B0F0"/><rect x="440" y="463" width="2" height="2" fill="#10B0F0"/><rect x="442" y="462" width="2" height="3" fill="#10B0F0"/><rect x="443" y="459" width="2" height="6" fill="#10B0F0"/><rect x="445" y="460" width="2" height="5" fill="#10B0F0"/><rect x="446" y="459" width="2" height="6" fill="#10B0F0"/><rect x="448" y="458" width="2" height="7" fill="#10B0F0"/><rect x="449" y="461" width="2" height="4" fill="#10B0F0"/><rect x="451" y="461" width="2" height="4" fill="#10B0F0"/><rect x="453" y="459" width="2" height="6" fill="#10B0F0"/><rect x="454" y="461" width="2" height="4" fill="#10B0F0"/><rect x="456" y="457" width="2" height="8" fill="#10B0F0"/><rect x="457" y="461" width="2" height="4" fill="#10B0F0"/><rect x="459" y="459" width="2" height="6" fill="#10B0F0"/><rect x="460" y="463" width="2" height="2" fill="#10B0F0"/><rect x="462" y="457" width="2" height="8" fill="#10B0F0"/><rect x="464" y="462" width="2" height="3" fill="#10B0F0"/><rect x="465" y="459" width="2" height="6" fill="#10B0F0"/><rect x="467" y="457" width="2" height="8" fill="#10B0F0"/><rect x="468" y="461" width="2" height="4" fill="#10B0F0"/><rect x="470" y="460" width="2" height="5" fill="#10B0F0"/><rect x="471" y="459" width="2" height="6" fill="#10B0F0"/><rect x="473" y="461" width="2" height="4" fill="#10B0F0"/><rect x="475" y="462" width="2" height="3" fill="#10B0F0"/><rect x="476" y="456" width="2" height="9" fill="#10B0F0"/><rect x="478" y="461" width="2" height="4" fill="#10B0F0"/><rect x="479" y="460" width="2" height="5" fill="#10B0F0"/><rect x="481" y="462" width="2" height="3" fill="#10B0F0"/><rect x="483" y="461" width="2" height="4" fill="#10B0F0"/><rect x="484" y="459" width="2" height="6" fill="#10B0F0"/><rect x="486" y="461" width="2" height="4" fill="#10B0F0"/><rect x="487" y="463" width="2" height="2" fill="#10B0F0"/><rect x="489" y="462" width="2" height="3" fill="#10B0F0"/><rect x="490" y="458" width="2" height="7" fill="#10B0F0"/><rect x="492" y="462" width="2" height="3" fill="#10B0F0"/><rect x="494" y="462" width="2" height="3" fill="#10B0F0"/><rect x="495" y="460" width="2" height="5" fill="#10B0F0"/><rect x="497" y="462" width="2" height="3" fill="#10B0F0"/><rect x="498" y="461" width="2" height="4" fill="#10B0F0"/><rect x="500" y="461" width="2" height="4" fill="#10B0F0"/><rect x="501" y="460" width="2" height="5" fill="#10B0F0"/><rect x="503" y="462" width="2" height="3" fill="#10B0F0"/><rect x="505" y="463" width="2" height="2" fill="#10B0F0"/><rect x="506" y="461" width="2" height="4" fill="#10B0F0"/><rect x="508" y="457" width="2" height="8" fill="#10B0F0"/><rect x="509" y="463" width="2" height="2" fill="#10B0F0"/><rect x="511" y="461" width="2" height="4" fill="#10B0F0"/><rect x="512" y="461" width="2" height="4" fill="#10B0F0"/><rect x="514" y="463" width="2" height="2" fill="#10B0F0"/><rect x="516" y="459" width="2" height="6" fill="#10B0F0"/><rect x="517" y="460" width="2" height="5" fill="#10B0F0"/><rect x="519" y="456" width="2" height="9" fill="#10B0F0"/><rect x="520" y="460" width="2" height="5" fill="#10B0F0"/><rect x="522" y="460" width="2" height="5" fill="#10B0F0"/><rect x="523" y="462" width="2" height="3" fill="#10B0F0"/><rect x="525" y="458" width="2" height="7" fill="#10B0F0"/><rect x="527" y="457" width="2" height="8" fill="#10B0F0"/><rect x="528" y="461" width="2" height="4" fill="#10B0F0"/><rect x="530" y="462" width="2" height="3" fill="#10B0F0"/><rect x="531" y="457" width="2" height="8" fill="#10B0F0"/><rect x="533" y="461" width="2" height="4" fill="#10B0F0"/><rect x="535" y="460" width="2" height="5" fill="#10B0F0"/><rect x="536" y="462" width="2" height="3" fill="#10B0F0"/><rect x="538" y="461" width="2" height="4" fill="#10B0F0"/><rect x="539" y="460" width="2" height="5" fill="#10B0F0"/><rect x="541" y="463" width="2" height="2" fill="#10B0F0"/><rect x="542" y="460" width="2" height="5" fill="#10B0F0"/><rect x="544" y="462" width="2" height="3" fill="#10B0F0"/><rect x="546" y="462" width="2" height="3" fill="#10B0F0"/><rect x="547" y="462" width="2" height="3" fill="#10B0F0"/><rect x="549" y="461" width="2" height="4" fill="#10B0F0"/><rect x="550" y="456" width="2" height="9" fill="#10B0F0"/><rect x="552" y="462" width="2" height="3" fill="#10B0F0"/><rect x="553" y="463" width="2" height="2" fill="#10B0F0"/><rect x="555" y="463" width="2" height="2" fill="#10B0F0"/><rect x="557" y="459" width="2" height="6" fill="#10B0F0"/><rect x="558" y="462" width="2" height="3" fill="#10B0F0"/><rect x="560" y="459" width="2" height="6" fill="#10B0F0"/><rect x="561" y="462" width="2" height="3" fill="#10B0F0"/><rect x="563" y="457" width="2" height="8" fill="#10B0F0"/><rect x="564" y="459" width="2" height="6" fill="#10B0F0"/><rect x="566" y="461" width="2" height="4" fill="#10B0F0"/><rect x="568" y="459" width="2" height="6" fill="#10B0F0"/><rect x="569" y="459" width="2" height="6" fill="#10B0F0"/><rect x="571" y="461" width="2" height="4" fill="#10B0F0"/><rect x="572" y="456" width="2" height="9" fill="#10B0F0"/><rect x="574" y="462" width="2" height="3" fill="#10B0F0"/><rect x="575" y="462" width="2" height="3" fill="#10B0F0"/><rect x="577" y="460" width="2" height="5" fill="#10B0F0"/><rect x="579" y="457" width="2" height="8" fill="#10B0F0"/><rect x="580" y="460" width="2" height="5" fill="#10B0F0"/><rect x="582" y="462" width="2" height="3" fill="#10B0F0"/><rect x="583" y="460" width="2" height="5" fill="#10B0F0"/><rect x="585" y="460" width="2" height="5" fill="#10B0F0"/><rect x="587" y="461" width="2" height="4" fill="#10B0F0"/><rect x="588" y="463" width="2" height="2" fill="#10B0F0"/><rect x="590" y="461" width="2" height="4" fill="#10B0F0"/><rect x="591" y="461" width="2" height="4" fill="#10B0F0"/><rect x="593" y="462" width="2" height="3" fill="#10B0F0"/><rect x="594" y="458" width="2" height="7" fill="#10B0F0"/><rect x="596" y="461" width="2" height="4" fill="#10B0F0"/><rect x="598" y="463" width="2" height="2" fill="#10B0F0"/><rect x="599" y="461" width="2" height="4" fill="#10B0F0"/><rect x="601" y="462" width="2" height="3" fill="#10B0F0"/><rect x="602" y="460" width="2" height="5" fill="#10B0F0"/><rect x="604" y="461" width="2" height="4" fill="#10B0F0"/><rect x="605" y="458" width="2" height="7" fill="#10B0F0"/><rect x="607" y="457" width="2" height="8" fill="#10B0F0"/><rect x="609" y="458" width="2" height="7" fill="#10B0F0"/><rect x="610" y="462" width="2" height="3" fill="#10B0F0"/><rect x="612" y="463" width="2" height="2" fill="#10B0F0"/><rect x="613" y="462" width="2" height="3" fill="#10B0F0"/><rect x="615" y="461" width="2" height="4" fill="#10B0F0"/><rect x="616" y="459" width="2" height="6" fill="#10B0F0"/><rect x="618" y="461" width="2" height="4" fill="#10B0F0"/><rect x="620" y="463" width="2" height="2" fill="#10B0F0"/><rect x="621" y="462" width="2" height="3" fill="#10B0F0"/><rect x="623" y="458" width="2" height="7" fill="#10B0F0"/><rect x="624" y="460" width="2" height="5" fill="#10B0F0"/><rect x="626" y="461" width="2" height="4" fill="#10B0F0"/><rect x="627" y="461" width="2" height="4" fill="#10B0F0"/><rect x="629" y="460" width="2" height="5" fill="#10B0F0"/><rect x="631" y="462" width="2" height="3" fill="#10B0F0"/><rect x="632" y="462" width="2" height="3" fill="#10B0F0"/><rect x="634" y="462" width="2" height="3" fill="#10B0F0"/><rect x="635" y="461" width="2" height="4" fill="#10B0F0"/><rect x="637" y="458" width="2" height="7" fill="#10B0F0"/><rect x="639" y="457" width="2" height="8" fill="#10B0F0"/><rect x="640" y="461" width="2" height="4" fill="#10B0F0"/><rect x="642" y="463" width="2" height="2" fill="#10B0F0"/><rect x="643" y="458" width="2" height="7" fill="#10B0F0"/><rect x="645" y="460" width="2" height="5" fill="#10B0F0"/><rect x="646" y="460" width="2" height="5" fill="#10B0F0"/><rect x="648" y="458" width="2" height="7" fill="#10B0F0"/><rect x="650" y="459" width="2" height="6" fill="#10B0F0"/><rect x="651" y="462" width="2" height="3" fill="#10B0F0"/><rect x="653" y="458" width="2" height="7" fill="#10B0F0"/><rect x="654" y="459" width="2" height="6" fill="#10B0F0"/><rect x="656" y="461" width="2" height="4" fill="#10B0F0"/><rect x="657" y="458" width="2" height="7" fill="#10B0F0"/><rect x="659" y="462" width="2" height="3" fill="#10B0F0"/><rect x="661" y="461" width="2" height="4" fill="#10B0F0"/><rect x="662" y="460" width="2" height="5" fill="#10B0F0"/><rect x="664" y="462" width="2" height="3" fill="#10B0F0"/><rect x="665" y="457" width="2" height="8" fill="#10B0F0"/><rect x="667" y="462" width="2" height="3" fill="#10B0F0"/><rect x="668" y="461" width="2" height="4" fill="#10B0F0"/><rect x="670" y="461" width="2" height="4" fill="#10B0F0"/><rect x="672" y="461" width="2" height="4" fill="#10B0F0"/><rect x="673" y="458" width="2" height="7" fill="#10B0F0"/><rect x="675" y="461" width="2" height="4" fill="#10B0F0"/><rect x="676" y="456" width="2" height="9" fill="#10B0F0"/><rect x="678" y="461" width="2" height="4" fill="#10B0F0"/><rect x="679" y="462" width="2" height="3" fill="#10B0F0"/><rect x="681" y="456" width="2" height="9" fill="#10B0F0"/><rect x="683" y="457" width="2" height="8" fill="#10B0F0"/><rect x="684" y="459" width="2" height="6" fill="#10B0F0"/><rect x="686" y="461" width="2" height="4" fill="#10B0F0"/><rect x="687" y="457" width="2" height="8" fill="#10B0F0"/><rect x="689" y="460" width="2" height="5" fill="#10B0F0"/><rect x="691" y="459" width="2" height="6" fill="#10B0F0"/><rect x="692" y="458" width="2" height="7" fill="#10B0F0"/><rect x="694" y="462" width="2" height="3" fill="#10B0F0"/><rect x="695" y="460" width="2" height="5" fill="#10B0F0"/><rect x="697" y="463" width="2" height="2" fill="#10B0F0"/><rect x="698" y="462" width="2" height="3" fill="#10B0F0"/><rect x="700" y="462" width="2" height="3" fill="#10B0F0"/><rect x="702" y="463" width="2" height="2" fill="#10B0F0"/><rect x="703" y="461" width="2" height="4" fill="#10B0F0"/><rect x="705" y="459" width="2" height="6" fill="#10B0F0"/><rect x="706" y="460" width="2" height="5" fill="#10B0F0"/><rect x="708" y="457" width="2" height="8" fill="#10B0F0"/><rect x="709" y="459" width="2" height="6" fill="#10B0F0"/><rect x="711" y="457" width="2" height="8" fill="#10B0F0"/><rect x="713" y="460" width="2" height="5" fill="#10B0F0"/><rect x="714" y="455" width="2" height="10" fill="#10B0F0"/><rect x="716" y="459" width="2" height="6" fill="#10B0F0"/><rect x="717" y="461" width="2" height="4" fill="#10B0F0"/><rect x="719" y="461" width="2" height="4" fill="#10B0F0"/><rect x="720" y="462" width="2" height="3" fill="#10B0F0"/><rect x="722" y="461" width="2" height="4" fill="#10B0F0"/><rect x="724" y="460" width="2" height="5" fill="#10B0F0"/><rect x="725" y="455" width="2" height="10" fill="#10B0F0"/><rect x="727" y="461" width="2" height="4" fill="#10B0F0"/><rect x="728" y="460" width="2" height="5" fill="#10B0F0"/><rect x="730" y="460" width="2" height="5" fill="#10B0F0"/><rect x="732" y="462" width="2" height="3" fill="#10B0F0"/><rect x="733" y="459" width="2" height="6" fill="#10B0F0"/><rect x="735" y="460" width="2" height="5" fill="#10B0F0"/><rect x="736" y="453" width="2" height="12" fill="#10B0F0"/><rect x="738" y="459" width="2" height="6" fill="#10B0F0"/><rect x="739" y="457" width="2" height="8" fill="#10B0F0"/><rect x="741" y="451" width="2" height="14" fill="#10B0F0"/><rect x="743" y="447" width="2" height="18" fill="#10B0F0"/><rect x="744" y="453" width="2" height="12" fill="#10B0F0"/><rect x="746" y="453" width="2" height="12" fill="#10B0F0"/><rect x="747" y="459" width="2" height="6" fill="#10B0F0"/><rect x="749" y="459" width="2" height="6" fill="#10B0F0"/><rect x="750" y="455" width="2" height="10" fill="#10B0F0"/><rect x="752" y="451" width="2" height="14" fill="#10B0F0"/><rect x="754" y="449" width="2" height="16" fill="#10B0F0"/><rect x="755" y="455" width="2" height="10" fill="#10B0F0"/><rect x="757" y="457" width="2" height="8" fill="#10B0F0"/><rect x="758" y="449" width="2" height="16" fill="#10B0F0"/><rect x="760" y="455" width="2" height="10" fill="#10B0F0"/><rect x="761" y="453" width="2" height="12" fill="#10B0F0"/><rect x="763" y="449" width="2" height="16" fill="#10B0F0"/><rect x="765" y="455" width="2" height="10" fill="#10B0F0"/><rect x="766" y="449" width="2" height="16" fill="#10B0F0"/><rect x="768" y="460" width="2" height="5" fill="#10B0F0"/><rect x="769" y="460" width="2" height="5" fill="#10B0F0"/><rect x="771" y="453" width="2" height="12" fill="#10B0F0"/><rect x="772" y="455" width="2" height="10" fill="#10B0F0"/><rect x="774" y="457" width="2" height="8" fill="#10B0F0"/><rect x="776" y="456" width="2" height="9" fill="#10B0F0"/><rect x="777" y="460" width="2" height="5" fill="#10B0F0"/><rect x="779" y="460" width="2" height="5" fill="#10B0F0"/><rect x="780" y="449" width="2" height="16" fill="#10B0F0"/><rect x="782" y="447" width="2" height="18" fill="#10B0F0"/><rect x="784" y="459" width="2" height="6" fill="#10B0F0"/><rect x="785" y="453" width="2" height="12" fill="#10B0F0"/><rect x="787" y="459" width="2" height="6" fill="#10B0F0"/><rect x="788" y="457" width="2" height="8" fill="#10B0F0"/><rect x="790" y="456" width="2" height="9" fill="#10B0F0"/><rect x="791" y="455" width="2" height="10" fill="#10B0F0"/><rect x="793" y="458" width="2" height="7" fill="#10B0F0"/><rect x="795" y="459" width="2" height="6" fill="#10B0F0"/><rect x="796" y="459" width="2" height="6" fill="#10B0F0"/><rect x="798" y="453" width="2" height="12" fill="#10B0F0"/><rect x="799" y="451" width="2" height="14" fill="#10B0F0"/><rect x="801" y="455" width="2" height="10" fill="#10B0F0"/><rect x="802" y="457" width="2" height="8" fill="#10B0F0"/><rect x="804" y="460" width="2" height="5" fill="#10B0F0"/><rect x="806" y="457" width="2" height="8" fill="#10B0F0"/><rect x="807" y="457" width="2" height="8" fill="#10B0F0"/><rect x="809" y="457" width="2" height="8" fill="#10B0F0"/><rect x="810" y="458" width="2" height="7" fill="#10B0F0"/><rect x="812" y="456" width="2" height="9" fill="#10B0F0"/><rect x="813" y="455" width="2" height="10" fill="#10B0F0"/><rect x="815" y="455" width="2" height="10" fill="#10B0F0"/><rect x="817" y="459" width="2" height="6" fill="#10B0F0"/><rect x="818" y="447" width="2" height="18" fill="#10B0F0"/><rect x="820" y="453" width="2" height="12" fill="#10B0F0"/><rect x="821" y="459" width="2" height="6" fill="#10B0F0"/><rect x="823" y="454" width="2" height="11" fill="#10B0F0"/><rect x="824" y="456" width="2" height="9" fill="#10B0F0"/><rect x="826" y="460" width="2" height="5" fill="#10B0F0"/><rect x="828" y="453" width="2" height="12" fill="#10B0F0"/><rect x="829" y="449" width="2" height="16" fill="#10B0F0"/><rect x="831" y="460" width="2" height="5" fill="#10B0F0"/><rect x="832" y="449" width="2" height="16" fill="#10B0F0"/><rect x="834" y="447" width="2" height="18" fill="#10B0F0"/><rect x="836" y="454" width="2" height="11" fill="#10B0F0"/><rect x="837" y="454" width="2" height="11" fill="#10B0F0"/><rect x="839" y="449" width="2" height="16" fill="#10B0F0"/><rect x="840" y="460" width="2" height="5" fill="#10B0F0"/><rect x="842" y="449" width="2" height="16" fill="#10B0F0"/><rect x="843" y="459" width="2" height="6" fill="#10B0F0"/><rect x="845" y="459" width="2" height="6" fill="#10B0F0"/><rect x="847" y="459" width="2" height="6" fill="#10B0F0"/><rect x="848" y="447" width="2" height="18" fill="#10B0F0"/><rect x="850" y="459" width="2" height="6" fill="#10B0F0"/><rect x="851" y="456" width="2" height="9" fill="#10B0F0"/><rect x="853" y="454" width="2" height="11" fill="#10B0F0"/><rect x="854" y="457" width="2" height="8" fill="#10B0F0"/><rect x="856" y="455" width="2" height="10" fill="#10B0F0"/><rect x="858" y="454" width="2" height="11" fill="#10B0F0"/><rect x="859" y="457" width="2" height="8" fill="#10B0F0"/><rect x="861" y="457" width="2" height="8" fill="#10B0F0"/><rect x="862" y="449" width="2" height="16" fill="#10B0F0"/><rect x="864" y="453" width="2" height="12" fill="#10B0F0"/><rect x="865" y="453" width="2" height="12" fill="#10B0F0"/><rect x="867" y="453" width="2" height="12" fill="#10B0F0"/><rect x="869" y="451" width="2" height="14" fill="#10B0F0"/><rect x="870" y="459" width="2" height="6" fill="#10B0F0"/><rect x="872" y="451" width="2" height="14" fill="#10B0F0"/><rect x="873" y="456" width="2" height="9" fill="#10B0F0"/><rect x="875" y="451" width="2" height="14" fill="#10B0F0"/><rect x="876" y="460" width="2" height="5" fill="#10B0F0"/><rect x="878" y="456" width="2" height="9" fill="#10B0F0"/><rect x="880" y="449" width="2" height="16" fill="#10B0F0"/><rect x="881" y="459" width="2" height="6" fill="#10B0F0"/><rect x="883" y="453" width="2" height="12" fill="#10B0F0"/><rect x="884" y="460" width="2" height="5" fill="#10B0F0"/><rect x="886" y="457" width="2" height="8" fill="#10B0F0"/><rect x="888" y="457" width="2" height="8" fill="#10B0F0"/><rect x="889" y="459" width="2" height="6" fill="#10B0F0"/><rect x="891" y="453" width="2" height="12" fill="#10B0F0"/><rect x="892" y="456" width="2" height="9" fill="#10B0F0"/><rect x="894" y="449" width="2" height="16" fill="#10B0F0"/><rect x="895" y="447" width="2" height="18" fill="#10B0F0"/><rect x="897" y="453" width="2" height="12" fill="#10B0F0"/><rect x="899" y="456" width="2" height="9" fill="#10B0F0"/><rect x="900" y="460" width="2" height="5" fill="#10B0F0"/><rect x="902" y="455" width="2" height="10" fill="#10B0F0"/><rect x="903" y="456" width="2" height="9" fill="#10B0F0"/><rect x="905" y="458" width="2" height="7" fill="#10B0F0"/><rect x="906" y="447" width="2" height="18" fill="#10B0F0"/><rect x="908" y="449" width="2" height="16" fill="#10B0F0"/><rect x="910" y="457" width="2" height="8" fill="#10B0F0"/><rect x="911" y="451" width="2" height="14" fill="#10B0F0"/><rect x="913" y="458" width="2" height="7" fill="#10B0F0"/><rect x="914" y="456" width="2" height="9" fill="#10B0F0"/><rect x="916" y="455" width="2" height="10" fill="#10B0F0"/><rect x="917" y="447" width="2" height="18" fill="#10B0F0"/><rect x="919" y="453" width="2" height="12" fill="#10B0F0"/><rect x="921" y="453" width="2" height="12" fill="#10B0F0"/><rect x="922" y="457" width="2" height="8" fill="#10B0F0"/><rect x="924" y="455" width="2" height="10" fill="#10B0F0"/><rect x="925" y="454" width="2" height="11" fill="#10B0F0"/><rect x="927" y="447" width="2" height="18" fill="#10B0F0"/><rect x="928" y="456" width="2" height="9" fill="#10B0F0"/><rect x="930" y="457" width="2" height="8" fill="#10B0F0"/><rect x="932" y="447" width="2" height="18" fill="#10B0F0"/><rect x="933" y="454" width="2" height="11" fill="#10B0F0"/><rect x="935" y="456" width="2" height="9" fill="#10B0F0"/><rect x="936" y="456" width="2" height="9" fill="#10B0F0"/><rect x="938" y="456" width="2" height="9" fill="#10B0F0"/><rect x="940" y="457" width="2" height="8" fill="#10B0F0"/><rect x="941" y="457" width="2" height="8" fill="#10B0F0"/><rect x="943" y="454" width="2" height="11" fill="#10B0F0"/><rect x="944" y="457" width="2" height="8" fill="#10B0F0"/><rect x="946" y="449" width="2" height="16" fill="#10B0F0"/><rect x="947" y="455" width="2" height="10" fill="#10B0F0"/><rect x="949" y="457" width="2" height="8" fill="#10B0F0"/><rect x="951" y="458" width="2" height="7" fill="#10B0F0"/><rect x="952" y="458" width="2" height="7" fill="#10B0F0"/><rect x="954" y="453" width="2" height="12" fill="#10B0F0"/><rect x="955" y="455" width="2" height="10" fill="#10B0F0"/><rect x="747" y="440" width="2" height="25" fill="#10B0F0"/><rect x="751" y="448" width="2" height="17" fill="#10B0F0"/><rect x="757" y="423" width="2" height="42" fill="#10B0F0"/><rect x="758" y="392" width="2" height="73" fill="#10B0F0"/><rect x="760" y="363" width="2" height="102" fill="#10B0F0"/><rect x="762" y="349" width="2" height="116" fill="#10B0F0"/><rect x="763" y="349" width="2" height="116" fill="#10B0F0"/><rect x="857" y="443" width="2" height="22" fill="#10B0F0"/><rect x="859" y="431" width="2" height="34" fill="#10B0F0"/><rect x="861" y="428" width="2" height="37" fill="#10B0F0"/><rect x="866" y="423" width="2" height="42" fill="#10B0F0"/><rect x="868" y="429" width="2" height="36" fill="#10B0F0"/><rect x="870" y="436" width="2" height="29" fill="#10B0F0"/><rect x="570" y="451" width="2" height="14" fill="#10B0F0"/><rect x="586" y="443" width="2" height="22" fill="#10B0F0"/><rect x="619" y="451" width="2" height="14" fill="#10B0F0"/><rect x="830" y="437" width="2" height="28" fill="#10B0F0"/><rect x="945" y="438" width="2" height="27" fill="#10B0F0"/><rect x="947" y="440" width="2" height="25" fill="#10B0F0"/><rect x="366" y="454" width="3" height="11" fill="#FF0000"/><rect x="377" y="458" width="3" height="7" fill="#FF0000"/><rect x="388" y="454" width="3" height="11" fill="#FF0000"/><rect x="399" y="459" width="3" height="6" fill="#FF0000"/><rect x="410" y="460" width="3" height="5" fill="#FF0000"/><rect x="421" y="461" width="3" height="4" fill="#FF0000"/><rect x="432" y="461" width="3" height="4" fill="#FF0000"/><rect x="443" y="459" width="3" height="6" fill="#FF0000"/><rect x="454" y="461" width="3" height="4" fill="#FF0000"/><rect x="465" y="460" width="3" height="5" fill="#FF0000"/><rect x="476" y="458" width="3" height="7" fill="#FF0000"/><rect x="487" y="458" width="3" height="7" fill="#FF0000"/><rect x="498" y="460" width="3" height="5" fill="#FF0000"/><rect x="509" y="461" width="3" height="4" fill="#FF0000"/><rect x="521" y="461" width="3" height="4" fill="#FF0000"/><rect x="532" y="462" width="3" height="3" fill="#FF0000"/><rect x="543" y="461" width="3" height="4" fill="#FF0000"/><rect x="554" y="463" width="3" height="2" fill="#FF0000"/><rect x="565" y="459" width="3" height="6" fill="#FF0000"/><rect x="577" y="458" width="3" height="7" fill="#FF0000"/><rect x="588" y="458" width="3" height="7" fill="#FF0000"/><rect x="599" y="461" width="3" height="4" fill="#FF0000"/><rect x="610" y="459" width="3" height="6" fill="#FF0000"/><rect x="621" y="456" width="3" height="9" fill="#FF0000"/><rect x="632" y="462" width="3" height="3" fill="#FF0000"/><rect x="644" y="459" width="3" height="6" fill="#FF0000"/><rect x="655" y="461" width="3" height="4" fill="#FF0000"/><rect x="666" y="460" width="3" height="5" fill="#FF0000"/><rect x="677" y="462" width="3" height="3" fill="#FF0000"/><rect x="688" y="459" width="3" height="6" fill="#FF0000"/><rect x="699" y="462" width="3" height="3" fill="#FF0000"/><rect x="710" y="460" width="3" height="5" fill="#FF0000"/><rect x="721" y="455" width="3" height="10" fill="#FF0000"/><rect x="741" y="444" width="3" height="21" fill="#FF0000"/><rect x="755" y="432" width="3" height="33" fill="#FF0000"/><rect x="732" y="458" width="3" height="7" fill="#FF0000"/><rect x="764" y="462" width="3" height="3" fill="#FF0000"/><rect x="775" y="454" width="3" height="11" fill="#FF0000"/><rect x="786" y="443" width="3" height="22" fill="#FF0000"/><rect x="797" y="446" width="3" height="19" fill="#FF0000"/><rect x="808" y="440" width="3" height="25" fill="#FF0000"/><rect x="819" y="449" width="3" height="16" fill="#FF0000"/><rect x="830" y="448" width="3" height="17" fill="#FF0000"/><rect x="842" y="456" width="3" height="9" fill="#FF0000"/><rect x="852" y="453" width="3" height="12" fill="#FF0000"/><rect x="863" y="372" width="3" height="93" fill="#FF0000"/><rect x="874" y="447" width="3" height="18" fill="#FF0000"/><rect x="886" y="455" width="3" height="10" fill="#FF0000"/><rect x="897" y="449" width="3" height="16" fill="#FF0000"/><rect x="908" y="448" width="3" height="17" fill="#FF0000"/><rect x="919" y="452" width="3" height="13" fill="#FF0000"/><rect x="930" y="453" width="3" height="12" fill="#FF0000"/><rect x="941" y="454" width="3" height="11" fill="#FF0000"/><rect x="951" y="444" width="3" height="21" fill="#FF0000"/><polyline points="374.0,441.0 385.0,427.8 396.0,443.6 407.1,446.8 418.1,448.9 429.1,448.9 440.1,441.9 451.1,449.8 462.2,444.5 473.2,437.5 484.2,438.9 495.2,447.7 506.2,448.9 517.3,441.0 528.3,430.0 539.3,441.0 550.3,444.8 561.3,426.0 572.4,436.6 583.4,421.1 594.4,436.6 605.4,430.8 616.4,430.0 627.5,447.7 638.5,447.7 649.5,444.1 660.5,449.8 671.5,430.8 682.6,439.0 693.6,454.0 704.6,435.2 715.6,423.9 726.6,440.9 737.7,379.8 748.7,317.8 759.7,151.8 770.7,398.0 781.7,392.9 792.8,407.8 803.8,407.8 814.8,404.7 825.8,391.1 836.8,415.0 847.9,409.8 858.9,189.8 869.9,403.9 880.9,416.0 891.9,399.0 903.0,400.8 914.0,417.8 925.0,412.7 936.0,402.7" fill="none" stroke="#0000FF" stroke-width="1"/><polyline points="374.0,424.8 385.0,422.5 396.0,420.8 407.1,423.7 418.1,436.6 429.1,441.0 440.1,441.9 451.1,437.8 462.2,438.9 473.2,441.0 484.2,431.8 495.2,427.8 506.2,433.6 517.3,441.0 528.3,436.0 539.3,422.0 550.3,422.0 561.3,434.0 572.4,422.9 583.4,416.9 594.4,413.7 605.4,413.7 616.4,421.1 627.5,415.0 638.5,427.8 649.5,441.0 660.5,437.8 671.5,424.8 682.6,429.7 693.6,422.0 704.6,438.5 715.6,435.8 726.6,414.8 737.7,418.0 748.7,325.2 759.7,181.0 770.7,407.1 781.7,369.7 792.8,365.9 803.8,372.8 814.8,382.9 825.8,382.0 836.8,369.8 847.9,376.8 858.9,215.8 869.9,389.1 880.9,386.9 891.9,386.9 903.0,383.1 914.0,371.7 925.0,385.0 936.0,393.8" fill="none" stroke="#FF0000" stroke-width="1"/><rect x="371.5" y="438.5" width="5" height="5" fill="#0000FF" stroke="#000" stroke-width="1"/><rect x="382.5" y="425.5" width="5" height="5" fill="#0000FF" stroke="#000" stroke-width="1"/><rect x="393.5" y="441.5" width="5" height="5" fill="#0000FF" stroke="#000" stroke-width="1"/><rect x="404.5" y="444.5" width="5" height="5" fill="#0000FF" stroke="#000" stroke-width="1"/><rect x="415.5" y="446.5" width="5" height="5" fill="#0000FF" stroke="#000" stroke-width="1"/><rect x="426.5" y="446.5" width="5" height="5" fill="#0000FF" stroke="#000" stroke-width="1"/><rect x="437.5" y="439.5" width="5" height="5" fill="#0000FF" stroke="#000" stroke-width="1"/><rect x="448.5" y="447.5" width="5" height="5" fill="#0000FF" stroke="#000" stroke-width="1"/><rect x="459.5" y="441.5" width="5" height="5" fill="#0000FF" stroke="#000" stroke-width="1"/><rect x="470.5" y="435.5" width="5" height="5" fill="#0000FF" stroke="#000" stroke-width="1"/><rect x="481.5" y="436.5" width="5" height="5" fill="#0000FF" stroke="#000" stroke-width="1"/><rect x="492.5" y="445.5" width="5" height="5" fill="#0000FF" stroke="#000" stroke-width="1"/><rect x="503.5" y="446.5" width="5" height="5" fill="#0000FF" stroke="#000" stroke-width="1"/><rect x="514.5" y="438.5" width="5" height="5" fill="#0000FF" stroke="#000" stroke-width="1"/><rect x="525.5" y="427.5" width="5" height="5" fill="#0000FF" stroke="#000" stroke-width="1"/><rect x="536.5" y="438.5" width="5" height="5" fill="#0000FF" stroke="#000" stroke-width="1"/><rect x="547.5" y="442.5" width="5" height="5" fill="#0000FF" stroke="#000" stroke-width="1"/><rect x="558.5" y="423.5" width="5" height="5" fill="#0000FF" stroke="#000" stroke-width="1"/><rect x="569.5" y="434.5" width="5" height="5" fill="#0000FF" stroke="#000" stroke-width="1"/><rect x="580.5" y="418.5" width="5" height="5" fill="#0000FF" stroke="#000" stroke-width="1"/><rect x="591.5" y="434.5" width="5" height="5" fill="#0000FF" stroke="#000" stroke-width="1"/><rect x="602.5" y="428.5" width="5" height="5" fill="#0000FF" stroke="#000" stroke-width="1"/><rect x="613.5" y="427.5" width="5" height="5" fill="#0000FF" stroke="#000" stroke-width="1"/><rect x="624.5" y="445.5" width="5" height="5" fill="#0000FF" stroke="#000" stroke-width="1"/><rect x="635.5" y="445.5" width="5" height="5" fill="#0000FF" stroke="#000" stroke-width="1"/><rect x="647.5" y="441.5" width="5" height="5" fill="#0000FF" stroke="#000" stroke-width="1"/><rect x="658.5" y="447.5" width="5" height="5" fill="#0000FF" stroke="#000" stroke-width="1"/><rect x="669.5" y="428.5" width="5" height="5" fill="#0000FF" stroke="#000" stroke-width="1"/><rect x="680.5" y="436.5" width="5" height="5" fill="#0000FF" stroke="#000" stroke-width="1"/><rect x="691.5" y="451.5" width="5" height="5" fill="#0000FF" stroke="#000" stroke-width="1"/><rect x="702.5" y="432.5" width="5" height="5" fill="#0000FF" stroke="#000" stroke-width="1"/><rect x="713.5" y="421.5" width="5" height="5" fill="#0000FF" stroke="#000" stroke-width="1"/><rect x="724.5" y="438.5" width="5" height="5" fill="#0000FF" stroke="#000" stroke-width="1"/><rect x="735.5" y="377.5" width="5" height="5" fill="#0000FF" stroke="#000" stroke-width="1"/><rect x="746.5" y="315.5" width="5" height="5" fill="#0000FF" stroke="#000" stroke-width="1"/><rect x="757.5" y="149.5" width="5" height="5" fill="#0000FF" stroke="#000" stroke-width="1"/><rect x="768.5" y="395.5" width="5" height="5" fill="#0000FF" stroke="#000" stroke-width="1"/><rect x="779.5" y="390.5" width="5" height="5" fill="#0000FF" stroke="#000" stroke-width="1"/><rect x="790.5" y="405.5" width="5" height="5" fill="#0000FF" stroke="#000" stroke-width="1"/><rect x="801.5" y="405.5" width="5" height="5" fill="#0000FF" stroke="#000" stroke-width="1"/><rect x="812.5" y="402.5" width="5" height="5" fill="#0000FF" stroke="#000" stroke-width="1"/><rect x="823.5" y="388.5" width="5" height="5" fill="#0000FF" stroke="#000" stroke-width="1"/><rect x="834.5" y="412.5" width="5" height="5" fill="#0000FF" stroke="#000" stroke-width="1"/><rect x="845.5" y="407.5" width="5" height="5" fill="#0000FF" stroke="#000" stroke-width="1"/><rect x="856.5" y="187.5" width="5" height="5" fill="#0000FF" stroke="#000" stroke-width="1"/><rect x="867.5" y="401.5" width="5" height="5" fill="#0000FF" stroke="#000" stroke-width="1"/><rect x="878.5" y="413.5" width="5" height="5" fill="#0000FF" stroke="#000" stroke-width="1"/><rect x="889.5" y="396.5" width="5" height="5" fill="#0000FF" stroke="#000" stroke-width="1"/><rect x="900.5" y="398.5" width="5" height="5" fill="#0000FF" stroke="#000" stroke-width="1"/><rect x="911.5" y="415.5" width="5" height="5" fill="#0000FF" stroke="#000" stroke-width="1"/><rect x="922.5" y="410.5" width="5" height="5" fill="#0000FF" stroke="#000" stroke-width="1"/><rect x="933.5" y="400.5" width="5" height="5" fill="#0000FF" stroke="#000" stroke-width="1"/><rect x="371.5" y="422.5" width="5" height="5" fill="#FF0000" stroke="#000" stroke-width="1"/><rect x="382.5" y="419.5" width="5" height="5" fill="#FF0000" stroke="#000" stroke-width="1"/><rect x="393.5" y="418.5" width="5" height="5" fill="#FF0000" stroke="#000" stroke-width="1"/><rect x="404.5" y="421.5" width="5" height="5" fill="#FF0000" stroke="#000" stroke-width="1"/><rect x="415.5" y="434.5" width="5" height="5" fill="#FF0000" stroke="#000" stroke-width="1"/><rect x="426.5" y="438.5" width="5" height="5" fill="#FF0000" stroke="#000" stroke-width="1"/><rect x="437.5" y="439.5" width="5" height="5" fill="#FF0000" stroke="#000" stroke-width="1"/><rect x="448.5" y="435.5" width="5" height="5" fill="#FF0000" stroke="#000" stroke-width="1"/><rect x="459.5" y="436.5" width="5" height="5" fill="#FF0000" stroke="#000" stroke-width="1"/><rect x="470.5" y="438.5" width="5" height="5" fill="#FF0000" stroke="#000" stroke-width="1"/><rect x="481.5" y="429.5" width="5" height="5" fill="#FF0000" stroke="#000" stroke-width="1"/><rect x="492.5" y="425.5" width="5" height="5" fill="#FF0000" stroke="#000" stroke-width="1"/><rect x="503.5" y="431.5" width="5" height="5" fill="#FF0000" stroke="#000" stroke-width="1"/><rect x="514.5" y="438.5" width="5" height="5" fill="#FF0000" stroke="#000" stroke-width="1"/><rect x="525.5" y="433.5" width="5" height="5" fill="#FF0000" stroke="#000" stroke-width="1"/><rect x="536.5" y="419.5" width="5" height="5" fill="#FF0000" stroke="#000" stroke-width="1"/><rect x="547.5" y="419.5" width="5" height="5" fill="#FF0000" stroke="#000" stroke-width="1"/><rect x="558.5" y="431.5" width="5" height="5" fill="#FF0000" stroke="#000" stroke-width="1"/><rect x="569.5" y="420.5" width="5" height="5" fill="#FF0000" stroke="#000" stroke-width="1"/><rect x="580.5" y="414.5" width="5" height="5" fill="#FF0000" stroke="#000" stroke-width="1"/><rect x="591.5" y="411.5" width="5" height="5" fill="#FF0000" stroke="#000" stroke-width="1"/><rect x="602.5" y="411.5" width="5" height="5" fill="#FF0000" stroke="#000" stroke-width="1"/><rect x="613.5" y="418.5" width="5" height="5" fill="#FF0000" stroke="#000" stroke-width="1"/><rect x="624.5" y="412.5" width="5" height="5" fill="#FF0000" stroke="#000" stroke-width="1"/><rect x="635.5" y="425.5" width="5" height="5" fill="#FF0000" stroke="#000" stroke-width="1"/><rect x="647.5" y="438.5" width="5" height="5" fill="#FF0000" stroke="#000" stroke-width="1"/><rect x="658.5" y="435.5" width="5" height="5" fill="#FF0000" stroke="#000" stroke-width="1"/><rect x="669.5" y="422.5" width="5" height="5" fill="#FF0000" stroke="#000" stroke-width="1"/><rect x="680.5" y="427.5" width="5" height="5" fill="#FF0000" stroke="#000" stroke-width="1"/><rect x="691.5" y="419.5" width="5" height="5" fill="#FF0000" stroke="#000" stroke-width="1"/><rect x="702.5" y="435.5" width="5" height="5" fill="#FF0000" stroke="#000" stroke-width="1"/><rect x="713.5" y="433.5" width="5" height="5" fill="#FF0000" stroke="#000" stroke-width="1"/><rect x="724.5" y="412.5" width="5" height="5" fill="#FF0000" stroke="#000" stroke-width="1"/><rect x="735.5" y="415.5" width="5" height="5" fill="#FF0000" stroke="#000" stroke-width="1"/><rect x="746.5" y="322.5" width="5" height="5" fill="#FF0000" stroke="#000" stroke-width="1"/><rect x="757.5" y="178.5" width="5" height="5" fill="#FF0000" stroke="#000" stroke-width="1"/><rect x="768.5" y="404.5" width="5" height="5" fill="#FF0000" stroke="#000" stroke-width="1"/><rect x="779.5" y="367.5" width="5" height="5" fill="#FF0000" stroke="#000" stroke-width="1"/><rect x="790.5" y="363.5" width="5" height="5" fill="#FF0000" stroke="#000" stroke-width="1"/><rect x="801.5" y="370.5" width="5" height="5" fill="#FF0000" stroke="#000" stroke-width="1"/><rect x="812.5" y="380.5" width="5" height="5" fill="#FF0000" stroke="#000" stroke-width="1"/><rect x="823.5" y="379.5" width="5" height="5" fill="#FF0000" stroke="#000" stroke-width="1"/><rect x="834.5" y="367.5" width="5" height="5" fill="#FF0000" stroke="#000" stroke-width="1"/><rect x="845.5" y="374.5" width="5" height="5" fill="#FF0000" stroke="#000" stroke-width="1"/><rect x="856.5" y="213.5" width="5" height="5" fill="#FF0000" stroke="#000" stroke-width="1"/><rect x="867.5" y="386.5" width="5" height="5" fill="#FF0000" stroke="#000" stroke-width="1"/><rect x="878.5" y="384.5" width="5" height="5" fill="#FF0000" stroke="#000" stroke-width="1"/><rect x="889.5" y="384.5" width="5" height="5" fill="#FF0000" stroke="#000" stroke-width="1"/><rect x="900.5" y="380.5" width="5" height="5" fill="#FF0000" stroke="#000" stroke-width="1"/><rect x="911.5" y="369.5" width="5" height="5" fill="#FF0000" stroke="#000" stroke-width="1"/><rect x="922.5" y="382.5" width="5" height="5" fill="#FF0000" stroke="#000" stroke-width="1"/><rect x="933.5" y="391.5" width="5" height="5" fill="#FF0000" stroke="#000" stroke-width="1"/><rect x="346" y="534" width="632" height="1" fill="#E4ECE4"/><rect x="346" y="534" width="1" height="170" fill="#E4ECE4"/><rect x="978" y="535" width="1" height="170" fill="#4A524A"/><rect x="347" y="704" width="632" height="1" fill="#4A524A"/><rect x="350" y="538" width="625" height="163" fill="#FAE8A9"/><rect x="349" y="537" width="626" height="1" fill="#4A524A"/><rect x="349" y="537" width="1" height="164" fill="#4A524A"/><rect x="975" y="537" width="1" height="165" fill="#E4ECE4"/><rect x="349" y="701" width="626" height="1" fill="#E4ECE4"/><rect x="350" y="682" width="625" height="1" fill="#DCDCD8"/><rect x="342" y="682" width="4" height="1" fill="#000"/><text x="334" y="686" text-anchor="end" font-size="11">19 500</text><rect x="350" y="663" width="625" height="1" fill="#DCDCD8"/><rect x="342" y="663" width="4" height="1" fill="#000"/><text x="334" y="667" text-anchor="end" font-size="11">20 000</text><rect x="350" y="644" width="625" height="1" fill="#DCDCD8"/><rect x="342" y="644" width="4" height="1" fill="#000"/><text x="334" y="648" text-anchor="end" font-size="11">20 500</text><rect x="350" y="626" width="625" height="1" fill="#DCDCD8"/><rect x="342" y="626" width="4" height="1" fill="#000"/><text x="334" y="630" text-anchor="end" font-size="11">21 000</text><rect x="350" y="607" width="625" height="1" fill="#DCDCD8"/><rect x="342" y="607" width="4" height="1" fill="#000"/><text x="334" y="611" text-anchor="end" font-size="11">21 500</text><rect x="350" y="588" width="625" height="1" fill="#DCDCD8"/><rect x="342" y="588" width="4" height="1" fill="#000"/><text x="334" y="592" text-anchor="end" font-size="11">22 000</text><rect x="350" y="569" width="625" height="1" fill="#DCDCD8"/><rect x="342" y="569" width="4" height="1" fill="#000"/><text x="334" y="573" text-anchor="end" font-size="11">22 500</text><rect x="350" y="550" width="625" height="1" fill="#DCDCD8"/><rect x="342" y="550" width="4" height="1" fill="#000"/><text x="334" y="554" text-anchor="end" font-size="11">23 000</text><rect x="344" y="697" width="2" height="1" fill="#000"/><rect x="344" y="694" width="2" height="1" fill="#000"/><rect x="344" y="690" width="2" height="1" fill="#000"/><rect x="344" y="686" width="2" height="1" fill="#000"/><rect x="344" y="678" width="2" height="1" fill="#000"/><rect x="344" y="675" width="2" height="1" fill="#000"/><rect x="344" y="671" width="2" height="1" fill="#000"/><rect x="344" y="667" width="2" height="1" fill="#000"/><rect x="344" y="660" width="2" height="1" fill="#000"/><rect x="344" y="656" width="2" height="1" fill="#000"/><rect x="344" y="652" width="2" height="1" fill="#000"/><rect x="344" y="648" width="2" height="1" fill="#000"/><rect x="344" y="641" width="2" height="1" fill="#000"/><rect x="344" y="637" width="2" height="1" fill="#000"/><rect x="344" y="633" width="2" height="1" fill="#000"/><rect x="344" y="629" width="2" height="1" fill="#000"/><rect x="344" y="622" width="2" height="1" fill="#000"/><rect x="344" y="618" width="2" height="1" fill="#000"/><rect x="344" y="614" width="2" height="1" fill="#000"/><rect x="344" y="611" width="2" height="1" fill="#000"/><rect x="344" y="603" width="2" height="1" fill="#000"/><rect x="344" y="599" width="2" height="1" fill="#000"/><rect x="344" y="595" width="2" height="1" fill="#000"/><rect x="344" y="592" width="2" height="1" fill="#000"/><rect x="344" y="584" width="2" height="1" fill="#000"/><rect x="344" y="580" width="2" height="1" fill="#000"/><rect x="344" y="577" width="2" height="1" fill="#000"/><rect x="344" y="573" width="2" height="1" fill="#000"/><rect x="344" y="565" width="2" height="1" fill="#000"/><rect x="344" y="562" width="2" height="1" fill="#000"/><rect x="344" y="558" width="2" height="1" fill="#000"/><rect x="344" y="554" width="2" height="1" fill="#000"/><rect x="344" y="546" width="2" height="1" fill="#000"/><rect x="344" y="543" width="2" height="1" fill="#000"/><rect x="378" y="539" width="1" height="162" fill="#DCDCD8"/><rect x="378" y="705" width="1" height="20" fill="#000"/><rect x="427" y="539" width="1" height="162" fill="#DCDCD8"/><rect x="427" y="705" width="1" height="20" fill="#000"/><rect x="474" y="539" width="1" height="162" fill="#DCDCD8"/><rect x="474" y="705" width="1" height="20" fill="#000"/><rect x="524" y="539" width="1" height="162" fill="#DCDCD8"/><rect x="524" y="705" width="1" height="20" fill="#000"/><rect x="573" y="539" width="1" height="162" fill="#DCDCD8"/><rect x="573" y="705" width="1" height="20" fill="#000"/><rect x="620" y="539" width="1" height="162" fill="#DCDCD8"/><rect x="620" y="705" width="1" height="20" fill="#000"/><rect x="672" y="539" width="1" height="162" fill="#DCDCD8"/><rect x="672" y="705" width="1" height="20" fill="#000"/><rect x="719" y="539" width="1" height="162" fill="#DCDCD8"/><rect x="719" y="705" width="1" height="20" fill="#000"/><rect x="767" y="539" width="1" height="162" fill="#DCDCD8"/><rect x="767" y="705" width="1" height="20" fill="#000"/><rect x="817" y="539" width="1" height="162" fill="#DCDCD8"/><rect x="817" y="705" width="1" height="20" fill="#000"/><rect x="862" y="539" width="1" height="162" fill="#DCDCD8"/><rect x="862" y="705" width="1" height="20" fill="#000"/><rect x="909" y="539" width="1" height="162" fill="#DCDCD8"/><rect x="909" y="705" width="1" height="20" fill="#000"/><rect x="956" y="539" width="1" height="162" fill="#DCDCD8"/><rect x="956" y="705" width="1" height="20" fill="#000"/><text x="380" y="720" font-size="11">май</text><text x="429" y="720" font-size="11">июн</text><text x="476" y="720" font-size="11">июл</text><text x="526" y="720" font-size="11">авг</text><text x="575" y="720" font-size="11">сен</text><text x="622" y="720" font-size="11">окт</text><text x="674" y="720" font-size="11">ноя</text><text x="721" y="720" font-size="11">дек</text><text x="769" y="720" font-size="11">2005</text><text x="819" y="720" font-size="11">фев</text><text x="864" y="720" font-size="11">мар</text><text x="911" y="720" font-size="11">апр</text><rect x="360" y="705" width="1" height="2" fill="#000"/><rect x="371" y="705" width="1" height="2" fill="#000"/><rect x="382" y="705" width="1" height="2" fill="#000"/><rect x="393" y="705" width="1" height="2" fill="#000"/><rect x="404" y="705" width="1" height="2" fill="#000"/><rect x="415" y="705" width="1" height="2" fill="#000"/><rect x="426" y="705" width="1" height="2" fill="#000"/><rect x="437" y="705" width="1" height="2" fill="#000"/><rect x="448" y="705" width="1" height="2" fill="#000"/><rect x="459" y="705" width="1" height="2" fill="#000"/><rect x="470" y="705" width="1" height="2" fill="#000"/><rect x="481" y="705" width="1" height="2" fill="#000"/><rect x="492" y="705" width="1" height="2" fill="#000"/><rect x="504" y="705" width="1" height="2" fill="#000"/><rect x="515" y="705" width="1" height="2" fill="#000"/><rect x="526" y="705" width="1" height="2" fill="#000"/><rect x="537" y="705" width="1" height="2" fill="#000"/><rect x="548" y="705" width="1" height="2" fill="#000"/><rect x="559" y="705" width="1" height="2" fill="#000"/><rect x="570" y="705" width="1" height="2" fill="#000"/><rect x="581" y="705" width="1" height="2" fill="#000"/><rect x="592" y="705" width="1" height="2" fill="#000"/><rect x="603" y="705" width="1" height="2" fill="#000"/><rect x="614" y="705" width="1" height="2" fill="#000"/><rect x="625" y="705" width="1" height="2" fill="#000"/><rect x="636" y="705" width="1" height="2" fill="#000"/><rect x="647" y="705" width="1" height="2" fill="#000"/><rect x="658" y="705" width="1" height="2" fill="#000"/><rect x="670" y="705" width="1" height="2" fill="#000"/><rect x="681" y="705" width="1" height="2" fill="#000"/><rect x="692" y="705" width="1" height="2" fill="#000"/><rect x="703" y="705" width="1" height="2" fill="#000"/><rect x="714" y="705" width="1" height="2" fill="#000"/><rect x="725" y="705" width="1" height="2" fill="#000"/><rect x="736" y="705" width="1" height="2" fill="#000"/><rect x="747" y="705" width="1" height="2" fill="#000"/><rect x="758" y="705" width="1" height="2" fill="#000"/><rect x="769" y="705" width="1" height="2" fill="#000"/><rect x="780" y="705" width="1" height="2" fill="#000"/><rect x="791" y="705" width="1" height="2" fill="#000"/><rect x="802" y="705" width="1" height="2" fill="#000"/><rect x="813" y="705" width="1" height="2" fill="#000"/><rect x="825" y="705" width="1" height="2" fill="#000"/><rect x="836" y="705" width="1" height="2" fill="#000"/><rect x="847" y="705" width="1" height="2" fill="#000"/><rect x="858" y="705" width="1" height="2" fill="#000"/><rect x="869" y="705" width="1" height="2" fill="#000"/><rect x="880" y="705" width="1" height="2" fill="#000"/><rect x="891" y="705" width="1" height="2" fill="#000"/><rect x="902" y="705" width="1" height="2" fill="#000"/><rect x="913" y="705" width="1" height="2" fill="#000"/><rect x="924" y="705" width="1" height="2" fill="#000"/><rect x="935" y="705" width="1" height="2" fill="#000"/><rect x="946" y="705" width="1" height="2" fill="#000"/><rect x="957" y="705" width="1" height="2" fill="#000"/><rect x="968" y="705" width="1" height="2" fill="#000"/><path d="M355,695 L363,693.4 H373.9 V689.1 H385.6 V686.5 H396.8 V683.2 H407.9 V679.3 H418.8 V676.4 H430.0 V672.1 H440.7 V669.5 H451.8 V666.2 H462.8 V663.3 H473.9 V660.4 H485.0 V658.4 H496.0 V654.3 H507.7 V651.4 H518.4 V649.4 H529.6 V646.5 H541.0 V643.3 H551.8 V642.4 H562.5 V640.3 H573.7 V638.3 H584.8 V635.3 H595.8 V632.1 H607.0 V630.4 H617.7 V627.4 H629.5 V624.2 H640.7 V621.4 H651.6 V618.4 H662.8 V615.1 H674.0 V612.4 H684.7 V609.1 H695.7 V607.4 H706.9 V605.5 H717.6 V603.3 H728.8 V601.2 H740.8 V599.5 H752.0 V597.5 H762.9 V593.3 H773.7 V591.3 H784.7 V590.6 H796.0 V587.6 H807.0 V585.3 H818.0 V584.4 H829.0 V584.4 H839.8 V581.4 H851.0 V577.3 H862.7 V574.5 H874.0 V571.5 H885.0 V568.3 H896.0 V566.5 H907.0 V562.4 H917.8 V559.1 H929.0 V556.2 H940.0 V552.3 H951.1 V549.3 H962.1 V545.1 H969.5" fill="none" stroke="#FF0000" stroke-width="3"/><circle cx="363.0" cy="692.9" r="2" fill="#FF0000" stroke="#000" stroke-width="1.1"/><circle cx="373.9" cy="688.6" r="2" fill="#FF0000" stroke="#000" stroke-width="1.1"/><circle cx="385.6" cy="686.0" r="2" fill="#FF0000" stroke="#000" stroke-width="1.1"/><circle cx="396.8" cy="682.7" r="2" fill="#FF0000" stroke="#000" stroke-width="1.1"/><circle cx="407.9" cy="678.8" r="2" fill="#FF0000" stroke="#000" stroke-width="1.1"/><circle cx="418.8" cy="675.9" r="2" fill="#FF0000" stroke="#000" stroke-width="1.1"/><circle cx="430.0" cy="671.6" r="2" fill="#FF0000" stroke="#000" stroke-width="1.1"/><circle cx="440.7" cy="669.0" r="2" fill="#FF0000" stroke="#000" stroke-width="1.1"/><circle cx="451.8" cy="665.7" r="2" fill="#FF0000" stroke="#000" stroke-width="1.1"/><circle cx="462.8" cy="662.8" r="2" fill="#FF0000" stroke="#000" stroke-width="1.1"/><circle cx="473.9" cy="659.9" r="2" fill="#FF0000" stroke="#000" stroke-width="1.1"/><circle cx="485.0" cy="657.9" r="2" fill="#FF0000" stroke="#000" stroke-width="1.1"/><circle cx="496.0" cy="653.8" r="2" fill="#FF0000" stroke="#000" stroke-width="1.1"/><circle cx="507.7" cy="650.9" r="2" fill="#FF0000" stroke="#000" stroke-width="1.1"/><circle cx="518.4" cy="648.9" r="2" fill="#FF0000" stroke="#000" stroke-width="1.1"/><circle cx="529.6" cy="646.0" r="2" fill="#FF0000" stroke="#000" stroke-width="1.1"/><circle cx="541.0" cy="642.8" r="2" fill="#FF0000" stroke="#000" stroke-width="1.1"/><circle cx="551.8" cy="641.9" r="2" fill="#FF0000" stroke="#000" stroke-width="1.1"/><circle cx="562.5" cy="639.8" r="2" fill="#FF0000" stroke="#000" stroke-width="1.1"/><circle cx="573.7" cy="637.8" r="2" fill="#FF0000" stroke="#000" stroke-width="1.1"/><circle cx="584.8" cy="634.8" r="2" fill="#FF0000" stroke="#000" stroke-width="1.1"/><circle cx="595.8" cy="631.6" r="2" fill="#FF0000" stroke="#000" stroke-width="1.1"/><circle cx="607.0" cy="629.9" r="2" fill="#FF0000" stroke="#000" stroke-width="1.1"/><circle cx="617.7" cy="626.9" r="2" fill="#FF0000" stroke="#000" stroke-width="1.1"/><circle cx="629.5" cy="623.7" r="2" fill="#FF0000" stroke="#000" stroke-width="1.1"/><circle cx="640.7" cy="620.9" r="2" fill="#FF0000" stroke="#000" stroke-width="1.1"/><circle cx="651.6" cy="617.9" r="2" fill="#FF0000" stroke="#000" stroke-width="1.1"/><circle cx="662.8" cy="614.6" r="2" fill="#FF0000" stroke="#000" stroke-width="1.1"/><circle cx="674.0" cy="611.9" r="2" fill="#FF0000" stroke="#000" stroke-width="1.1"/><circle cx="684.7" cy="608.6" r="2" fill="#FF0000" stroke="#000" stroke-width="1.1"/><circle cx="695.7" cy="606.9" r="2" fill="#FF0000" stroke="#000" stroke-width="1.1"/><circle cx="706.9" cy="605.0" r="2" fill="#FF0000" stroke="#000" stroke-width="1.1"/><circle cx="717.6" cy="602.8" r="2" fill="#FF0000" stroke="#000" stroke-width="1.1"/><circle cx="728.8" cy="600.7" r="2" fill="#FF0000" stroke="#000" stroke-width="1.1"/><circle cx="740.8" cy="599.0" r="2" fill="#FF0000" stroke="#000" stroke-width="1.1"/><circle cx="752.0" cy="597.0" r="2" fill="#FF0000" stroke="#000" stroke-width="1.1"/><circle cx="762.9" cy="592.8" r="2" fill="#FF0000" stroke="#000" stroke-width="1.1"/><circle cx="773.7" cy="590.8" r="2" fill="#FF0000" stroke="#000" stroke-width="1.1"/><circle cx="784.7" cy="590.1" r="2" fill="#FF0000" stroke="#000" stroke-width="1.1"/><circle cx="796.0" cy="587.1" r="2" fill="#FF0000" stroke="#000" stroke-width="1.1"/><circle cx="807.0" cy="584.8" r="2" fill="#FF0000" stroke="#000" stroke-width="1.1"/><circle cx="818.0" cy="583.9" r="2" fill="#FF0000" stroke="#000" stroke-width="1.1"/><circle cx="829.0" cy="583.9" r="2" fill="#FF0000" stroke="#000" stroke-width="1.1"/><circle cx="839.8" cy="580.9" r="2" fill="#FF0000" stroke="#000" stroke-width="1.1"/><circle cx="851.0" cy="576.8" r="2" fill="#FF0000" stroke="#000" stroke-width="1.1"/><circle cx="862.7" cy="574.0" r="2" fill="#FF0000" stroke="#000" stroke-width="1.1"/><circle cx="874.0" cy="571.0" r="2" fill="#FF0000" stroke="#000" stroke-width="1.1"/><circle cx="885.0" cy="567.8" r="2" fill="#FF0000" stroke="#000" stroke-width="1.1"/><circle cx="896.0" cy="566.0" r="2" fill="#FF0000" stroke="#000" stroke-width="1.1"/><circle cx="907.0" cy="561.9" r="2" fill="#FF0000" stroke="#000" stroke-width="1.1"/><circle cx="917.8" cy="558.6" r="2" fill="#FF0000" stroke="#000" stroke-width="1.1"/><circle cx="929.0" cy="555.7" r="2" fill="#FF0000" stroke="#000" stroke-width="1.1"/><circle cx="940.0" cy="551.8" r="2" fill="#FF0000" stroke="#000" stroke-width="1.1"/><circle cx="951.1" cy="548.8" r="2" fill="#FF0000" stroke="#000" stroke-width="1.1"/><circle cx="962.1" cy="544.6" r="2" fill="#FF0000" stroke="#000" stroke-width="1.1"/></svg></body></html>
